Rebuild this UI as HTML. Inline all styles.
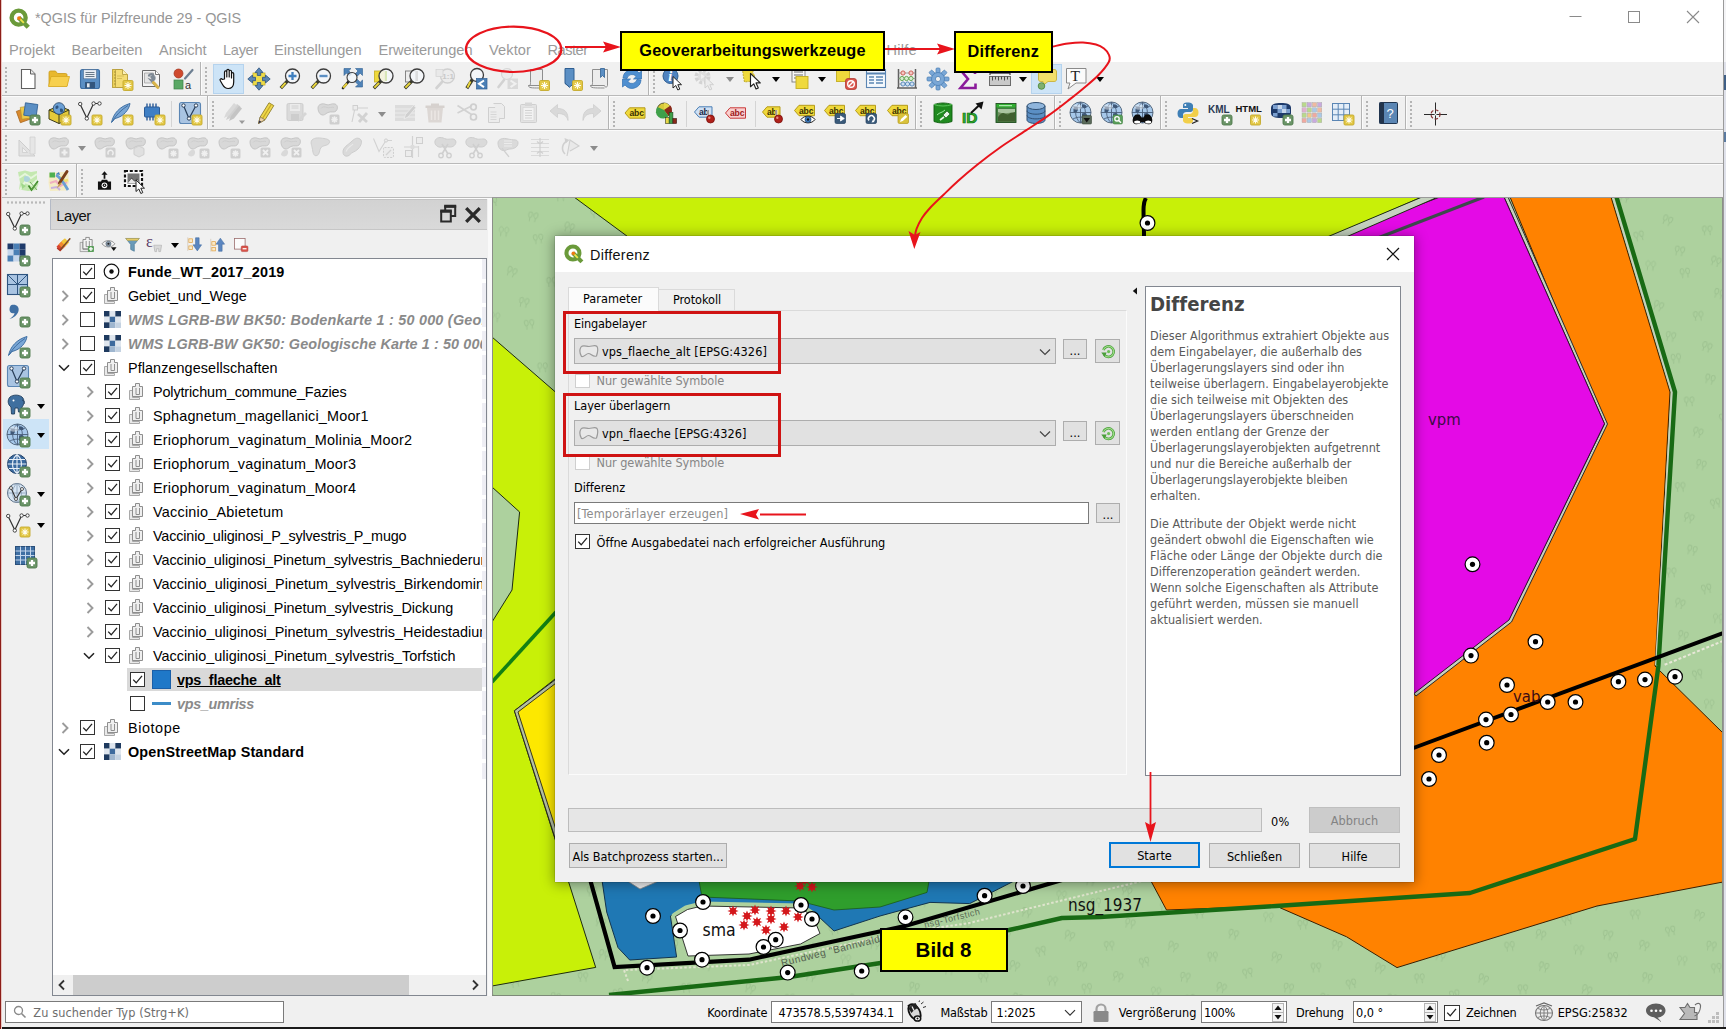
<!DOCTYPE html><html lang="de"><head><meta charset="utf-8"><title>QGIS für Pilzfreunde</title><style>

*{box-sizing:border-box;margin:0;padding:0}
html,body{width:1726px;height:1029px;overflow:hidden;background:#f0f0f0}
body{position:relative;font-family:"Liberation Sans",sans-serif;font-size:14.4px;color:#000}
.abs{position:absolute}
.tx{position:absolute;white-space:nowrap;line-height:1}
.ui{font-family:"DejaVu Sans Condensed","DejaVu Sans","Liberation Sans",sans-serif;font-size:12.6px}
#titlebar{left:0;top:0;width:1726px;height:62px;background:#fff}
#tb{left:0;top:62px;width:1726px;height:136px;background:#f0f0f0}
.hl{position:absolute;left:2px;width:1724px;height:1px;background:#b9b9b9;box-shadow:0 1px 0 #fbfbfb}
.vsep{position:absolute;width:1px;background:#b4b4b4;box-shadow:1px 0 0 #fbfbfb}
.hdl{position:absolute;width:3px;height:26px;background-image:linear-gradient(#b4b4b4 0 2px,transparent 2px 4px);background-size:2px 4px;background-repeat:repeat-y}
.ic{position:absolute;width:24px;height:24px;overflow:visible}
.dd{position:absolute;width:0;height:0;border-left:4.5px solid transparent;border-right:4.5px solid transparent;border-top:5px solid #000}
.dd.g{border-top-color:#8c8c8c}
#leftbar{left:2px;top:198px;width:50px;height:798px;background:#f0f0f0}
#panelhdr{left:50px;top:199px;width:437px;height:31px;background:linear-gradient(#d2d2d2,#d9d9d9);border-left:1px solid #b4bac6;border-top:1px solid #c2c2c2;border-bottom:1px solid #c6c6c6}
#tree{left:52px;top:258px;width:435px;height:738px;background:#fff;border:1px solid #828790;overflow:hidden}
.row{position:absolute;left:0;height:24px;width:433px}
.cb{position:absolute;width:15px;height:15px;border:1px solid #333;background:#fff}
.cb svg{position:absolute;left:0;top:0}
.exp{position:absolute;width:10px;height:10px}
#status{left:0;top:996px;width:1726px;height:31px;background:#f0f0f0}
.fld{position:absolute;background:#fff;border:1px solid #7a7a7a;height:22px}
#dlg{left:555px;top:236px;width:859px;height:646px;background:#f0f0f0;box-shadow:0 1px 12px 1px rgba(0,0,0,.38),0 0 1px rgba(0,0,0,.55)}
#dlgtitle{left:0;top:0;width:859px;height:36px;background:#fff}
.btn{position:absolute;background:#e1e1e1;border:1px solid #adadad;text-align:center;white-space:nowrap}
.combo{position:absolute;background:#e1e1e1;border:1px solid #adadad}
.redbox{position:absolute;border:3px solid #cf1313}
.ybox{position:absolute;background:#ffff00;border:2px solid #000;font-weight:bold;text-align:center;white-space:nowrap;font-family:"Liberation Sans",sans-serif}

</style></head><body>
<div id="titlebar" class="abs"></div>
<svg class="abs" style="left:9px;top:8px" width="21" height="21" viewBox="0 0 24 24"><circle cx="11" cy="11" r="8" fill="none" stroke="#6a9a3a" stroke-width="5"/><path d="M11 11 L22 22" stroke="#6a9a3a" stroke-width="5.2" stroke-linecap="butt"/><path d="M12.5 12.5 L17 17" stroke="#f0e64a" stroke-width="2.2"/><circle cx="11.5" cy="11.5" r="2.2" fill="#ee7913"/></svg>
<div class="tx " style="left:35px;top:10.5px;letter-spacing:-0.037px;font-size:14.4px;color:#969696;">*QGIS für Pilzfreunde 29 - QGIS</div>
<svg class="abs" style="left:1560px;top:5px" width="150" height="24" viewBox="0 0 150 24"><path d="M9.5 11.5h12" stroke="#8a8a8a" stroke-width="1"/><rect x="68.5" y="6.5" width="11" height="11" fill="none" stroke="#8a8a8a"/><path d="M127 6l12 12M139 6l-12 12" stroke="#8a8a8a" stroke-width="1.1"/></svg>
<div class="tx " style="left:9px;top:43px;letter-spacing:0.083px;font-size:14.6px;color:#9a9a9a;">Projekt</div>
<div class="tx " style="left:71.5px;top:43px;letter-spacing:0.041px;font-size:14.6px;color:#9a9a9a;">Bearbeiten</div>
<div class="tx " style="left:159px;top:43px;letter-spacing:-0.051px;font-size:14.6px;color:#9a9a9a;">Ansicht</div>
<div class="tx " style="left:223px;top:43px;letter-spacing:-0.303px;font-size:14.6px;color:#9a9a9a;">Layer</div>
<div class="tx " style="left:274px;top:43px;letter-spacing:-0.011px;font-size:14.6px;color:#9a9a9a;">Einstellungen</div>
<div class="tx " style="left:378.5px;top:43px;letter-spacing:-0.008px;font-size:14.6px;color:#9a9a9a;">Erweiterungen</div>
<div class="tx " style="left:489px;top:43px;letter-spacing:0.104px;font-size:14.6px;color:#9a9a9a;">Vektor</div>
<div class="tx " style="left:547.5px;top:43px;letter-spacing:-0.497px;font-size:14.6px;color:#9a9a9a;">Raster</div>
<div class="tx " style="left:886.5px;top:43px;letter-spacing:0.259px;font-size:14.6px;color:#9a9a9a;">Hilfe</div>
<div id="tb" class="abs"></div>
<div class="hl" style="top:95px"></div>
<div class="hl" style="top:129px"></div>
<div class="hl" style="top:163px"></div>
<div class="hl" style="top:197px"></div>
<div id="leftbar" class="abs"></div>
<div class="hdl" style="left:5px;top:67px"></div>
<div class="hdl" style="left:5px;top:101px"></div>
<div class="hdl" style="left:5px;top:135px"></div>
<div class="hdl" style="left:5px;top:169px"></div>
<svg class="ic" style="left:16.0px;top:66.5px;width:24px;height:24px" viewBox="0 0 24 24"><path d="M5.500 2.500h9l4.500 4.500v14.500h-13.500z" fill="#fff" stroke="#5f5f5f" stroke-width="1.100"/><path d="M14.500 2.500v4.500h4.500" fill="#e8e8e8" stroke="#5f5f5f" stroke-width="1"/></svg>
<svg class="ic" style="left:47.0px;top:66.5px;width:24px;height:24px" viewBox="0 0 24 24"><path d="M2 5.500c0-1 .5-1.500 1.500-1.500h5l2 2.500h8c1 0 1.500.5 1.500 1.500v11h-18z" fill="#e8b82e" stroke="#c99a1a" stroke-width="0.800"/><path d="M1.500 19.500l2.500-10h18.500l-2.500 10z" fill="#f7d04f" stroke="#d8a820" stroke-width="0.800"/></svg>
<svg class="ic" style="left:78.0px;top:66.5px;width:24px;height:24px" viewBox="0 0 24 24"><rect x="2.500" y="2.500" width="19" height="19" rx="2" fill="#5b8fc4" stroke="#3f6fa3" stroke-width="1.100"/><rect x="5.500" y="2.800" width="13" height="9" fill="#e9eef4" stroke="#4a6b90" stroke-width="0.600"/><path d="M7.500 5.500h9M7.500 7.500h9M7.500 9.500h9" stroke="#5a6b7c" stroke-width="0.900"/><rect x="7" y="15" width="10" height="6.300" fill="#33567d"/><rect x="9" y="16.300" width="2.600" height="4" fill="#dfe6ee"/></svg>
<svg class="ic" style="left:109.0px;top:66.5px;width:24px;height:24px" viewBox="0 0 24 24"><path d="M3.500 2.500h10l5 5v13h-15z" fill="#f4dc74" stroke="#b9a040" stroke-width="1"/><path d="M13.500 2.500v5h5" fill="#fbf0b8" stroke="#b9a040" stroke-width="0.900"/><path d="M3.500 2.500h3v18h-3z" fill="#ecd15a" stroke="#b9a040" stroke-width="0.800"/><path d="M5 5h1.500M5 8h1.500M5 11h1.500M5 14h1.500M5 17h1.500" stroke="#8a7726" stroke-width="0.700"/><path d="M8 9h7M8 11.500h5" stroke="#d6be55" stroke-width="1"/><rect x="14" y="13.5" width="10" height="10" rx="1.200" fill="#e3c846" stroke="#c4a92c" stroke-width="0.900"/><path d="M19 15.0v7M15.5 18.5h7M16.5 16.0l5 5M21.5 16.0l-5 5" stroke="#fffdf0" stroke-width="1.050"/><circle cx="19" cy="18.5" r="1.300" fill="#fffdf0"/></svg>
<svg class="ic" style="left:140.0px;top:66.5px;width:24px;height:24px" viewBox="0 0 24 24"><path d="M2.500 3.500h13l4 4v12h-17z" fill="#f4f4f4" stroke="#6a6a6a" stroke-width="1"/><path d="M15.500 3.500v4h4" fill="#fff" stroke="#6a6a6a" stroke-width="0.900"/><path d="M4.500 6h9v10h-9z" fill="#e4e4e4" stroke="#9a9a9a" stroke-width="0.700"/><path d="M9 8.500c1.500-2 4-1.500 4.500 0l-2 1.500 1 1.500 2-1c.5 2-1.500 3.500-3.500 2.800l5.500 6.200" fill="none" stroke="#7f8a95" stroke-width="2.200" stroke-linecap="round"/><path d="M13.500 15.500l4.500 5" stroke="#d9b44a" stroke-width="3" stroke-linecap="round"/></svg>
<svg class="ic" style="left:171.0px;top:66.5px;width:24px;height:24px" viewBox="0 0 24 24"><circle cx="7.500" cy="6.500" r="4.500" fill="#cf4a2e" stroke="#a03520" stroke-width="0.700"/><rect x="3" y="13" width="9" height="9" fill="#5aa865" stroke="#3d8248" stroke-width="0.700"/><path d="M14 11.500L21.500 3" stroke="#6d7f92" stroke-width="2.200" stroke-linecap="round"/><text x="14" y="21.500" font-family="Liberation Sans,sans-serif" font-size="11" fill="#333">a</text></svg>
<div class="vsep" style="left:200px;top:62px;height:33px"></div>
<div class="hdl" style="left:205px;top:67px"></div>
<div class="abs" style="left:213px;top:64px;width:31px;height:30px;background:#cde4f7;border:1px solid #b5d3ee"></div>
<svg class="ic" style="left:217.0px;top:66.5px;width:24px;height:24px" viewBox="0 0 24 24"><path d="M7.500 12V5.200c0-1.700 2.300-1.700 2.300 0V10 3.700c0-1.700 2.400-1.700 2.400 0V10 4.500c0-1.700 2.300-1.700 2.300 0V11 6.800c0-1.600 2.200-1.600 2.200 0V15c0 4-2 6.500-5.500 6.500-3 0-4.300-1.500-5.700-4l-2.300-4c-.8-1.400 1-2.400 2-1.200z" fill="#fff" stroke="#111" stroke-width="1.200" stroke-linejoin="round"/></svg>
<svg class="ic" style="left:247.0px;top:66.5px;width:24px;height:24px" viewBox="0 0 24 24"><rect x="6" y="6" width="12" height="12" fill="#eedc4a" stroke="#c9b52a" stroke-width="0.800"/><g fill="#5b86b4" stroke="#2f5580" stroke-width="0.800"><path d="M12 0.800l4 4.700h-2.300v3h-3.400v-3H8z"/><path d="M12 23.200l4-4.700h-2.300v-3h-3.400v3H8z"/><path d="M0.800 12l4.700-4v2.300h3v3.400h-3V16z"/><path d="M23.200 12l-4.700-4v2.300h-3v3.400h3V16z"/></g></svg>
<svg class="ic" style="left:278.0px;top:66.5px;width:24px;height:24px" viewBox="0 0 24 24"><path d="M9.600000000000001 13.899999999999999L2.800 21.200" stroke="#3a3a2a" stroke-width="3.400" stroke-linecap="butt"/><path d="M7.600000000000001 15.899999999999999L3.400 20.600" stroke="#ecd93f" stroke-width="2" stroke-linecap="butt"/><circle cx="14.5" cy="9" r="7" fill="#f4f7fa" fill-opacity="0.85" stroke="#3c3c3c" stroke-width="1.300"/><path d="M14.500 5v8M10.500 9h8" stroke="#3f7fbf" stroke-width="2.300"/></svg>
<svg class="ic" style="left:309.0px;top:66.5px;width:24px;height:24px" viewBox="0 0 24 24"><path d="M9.600000000000001 13.899999999999999L2.800 21.200" stroke="#3a3a2a" stroke-width="3.400" stroke-linecap="butt"/><path d="M7.600000000000001 15.899999999999999L3.400 20.600" stroke="#ecd93f" stroke-width="2" stroke-linecap="butt"/><circle cx="14.5" cy="9" r="7" fill="#f4f7fa" fill-opacity="0.85" stroke="#3c3c3c" stroke-width="1.300"/><path d="M10.500 9h8" stroke="#5b8fc4" stroke-width="2.400"/></svg>
<svg class="ic" style="left:340.0px;top:66.5px;width:24px;height:24px" viewBox="0 0 24 24"><g fill="#4f83b8" stroke="#2f5f92" stroke-width="0.600"><path d="M4 1.500h7l-2.300 2.300 3 3-2.200 2.200-3-3L4 8.500z"/><path d="M22.500 1.500v7l-2.300-2.300-3 3-2.200-2.200 3-3-2.500-2.500z"/><path d="M22.500 20v-7l-2.300 2.300-3-3-2.200 2.200 3 3-2.500 2.500z"/></g><path d="M8.500 14.500L3 21" stroke="#222" stroke-width="2.600" stroke-linecap="round"/><path d="M7 16.500L3.200 20.800" stroke="#e5cf3c" stroke-width="2.200"/><circle cx="12" cy="10.500" r="5" fill="#f4f7fa" fill-opacity=".8" stroke="#3c3c3c" stroke-width="1.100"/></svg>
<svg class="ic" style="left:371.0px;top:66.5px;width:24px;height:24px" viewBox="0 0 24 24"><rect x="3.500" y="4" width="10" height="11" fill="#efd93c" stroke="#c4ae22" stroke-width="0.800"/><path d="M10.100000000000001 13.899999999999999L2.800 21.200" stroke="#3a3a2a" stroke-width="3.400" stroke-linecap="butt"/><path d="M8.100000000000001 15.899999999999999L3.400 20.600" stroke="#ecd93f" stroke-width="2" stroke-linecap="butt"/><circle cx="15" cy="9" r="7" fill="#f4f7fa" fill-opacity="0.85" stroke="#3c3c3c" stroke-width="1.300"/><path d="M15 4v10" stroke="#cfe0a0" stroke-width="1.500"/></svg>
<svg class="ic" style="left:402.0px;top:66.5px;width:24px;height:24px" viewBox="0 0 24 24"><rect x="3.500" y="4" width="10" height="11" fill="#ececec" stroke="#7a7a7a" stroke-width="0.900"/><path d="M10.100000000000001 13.899999999999999L2.800 21.200" stroke="#3a3a2a" stroke-width="3.400" stroke-linecap="butt"/><path d="M8.100000000000001 15.899999999999999L3.400 20.600" stroke="#ecd93f" stroke-width="2" stroke-linecap="butt"/><circle cx="15" cy="9" r="7" fill="#f4f7fa" fill-opacity="0.85" stroke="#3c3c3c" stroke-width="1.300"/><path d="M15 4v10" stroke="#d5d5d5" stroke-width="1.500"/></svg>
<svg class="ic" style="left:433.0px;top:66.5px;width:24px;height:24px" viewBox="0 0 24 24"><path d="M9 15L3.500 21" stroke="#d2d2d2" stroke-width="2.600" stroke-linecap="round"/><circle cx="14.500" cy="9" r="7" fill="#ececec" stroke="#cfcfcf" stroke-width="1.300"/><text x="9.300" y="12" font-family="Liberation Sans,sans-serif" font-weight="bold" font-size="8" fill="#c8c8c8">1:1</text><rect x="3" y="2.500" width="7" height="7" fill="#e9e9e9" stroke="#d2d2d2" stroke-width="0.700"/></svg>
<svg class="ic" style="left:464.0px;top:66.5px;width:24px;height:24px" viewBox="0 0 24 24"><path d="M8.45 12.55L2.800 21.200" stroke="#3a3a2a" stroke-width="3.400" stroke-linecap="butt"/><path d="M6.449999999999999 14.55L3.400 20.600" stroke="#ecd93f" stroke-width="2" stroke-linecap="butt"/><circle cx="13" cy="8" r="6.5" fill="#f4f7fa" fill-opacity="0.85" stroke="#3c3c3c" stroke-width="1.300"/><rect x="12.500" y="11.500" width="10.500" height="10.500" fill="#4a7fb5" stroke="#2f5f92" stroke-width="0.700"/><path d="M20 13.500l-5 3.300 5 3.300" fill="none" stroke="#fff" stroke-width="2"/></svg>
<svg class="ic" style="left:495.0px;top:66.5px;width:24px;height:24px" viewBox="0 0 24 24"><path d="M9 13L3.500 20" stroke="#d2d2d2" stroke-width="2.600" stroke-linecap="round"/><circle cx="12" cy="7" r="5.500" fill="#ececec" stroke="#d6d6d6" stroke-width="1.200"/><rect x="12.500" y="11.500" width="10.500" height="10.500" fill="#d9d9d9"/><path d="M15.500 13.500l5 3.300-5 3.300" fill="none" stroke="#f0f0f0" stroke-width="2"/></svg>
<svg class="ic" style="left:526.0px;top:66.5px;width:24px;height:24px" viewBox="0 0 24 24"><path d="M4.500 2.500h12v16c0 2-3 2-3 0h-11c2 0 2-1 2-3z" fill="#ececec" stroke="#8e8e8e" stroke-width="1"/><path d="M2.500 18.500c0 2.500 3 2.500 11 2.500" fill="none" stroke="#8e8e8e" stroke-width="1"/><rect x="13.5" y="13.5" width="10" height="10" rx="1.200" fill="#e3c846" stroke="#c4a92c" stroke-width="0.900"/><path d="M18.5 15.0v7M15.0 18.5h7M16.0 16.0l5 5M21.0 16.0l-5 5" stroke="#fffdf0" stroke-width="1.050"/><circle cx="18.5" cy="18.5" r="1.300" fill="#fffdf0"/></svg>
<svg class="ic" style="left:559.0px;top:66.5px;width:24px;height:24px" viewBox="0 0 24 24"><path d="M6 1.500h9v15l-4.500 3.500-4.500-3.500z" fill="#5b8fc4" stroke="#2f5f92" stroke-width="1"/><path d="M6 16l4.500 4.500" stroke="#2f5f92" stroke-width="1"/><rect x="13.5" y="13.5" width="10" height="10" rx="1.200" fill="#e3c846" stroke="#c4a92c" stroke-width="0.900"/><path d="M18.5 15.0v7M15.0 18.5h7M16.0 16.0l5 5M21.0 16.0l-5 5" stroke="#fffdf0" stroke-width="1.050"/><circle cx="18.5" cy="18.5" r="1.300" fill="#fffdf0"/></svg>
<svg class="ic" style="left:588.0px;top:66.5px;width:24px;height:24px" viewBox="0 0 24 24"><path d="M4.500 2.500h15v16c0 2-3 2-3 0h-14c2 0 2-1 2-3z" fill="#ececec" stroke="#8e8e8e" stroke-width="1"/><path d="M2.500 18.500c0 2.500 3 2.500 14 2.500" fill="none" stroke="#8e8e8e" stroke-width="1"/><path d="M12.500 1.500h4v9l-2-2-2 2z" fill="#5b8fc4" stroke="#2f5f92" stroke-width="0.800"/></svg>
<svg class="ic" style="left:620.0px;top:66.5px;width:24px;height:24px" viewBox="0 0 24 24"><path d="M3 11a9 9 0 0 1 16-5l2.500-2v8h-8l2.700-2.500a5.200 5.200 0 0 0-9.200 2z" fill="#4f8fd0" stroke="#2f6fb0" stroke-width="0.700"/><path d="M21 13a9 9 0 0 1-16 5l-2.500 2v-8h8l-2.700 2.500a5.200 5.200 0 0 0 9.200-2z" fill="#4f8fd0" stroke="#2f6fb0" stroke-width="0.700"/></svg>
<div class="vsep" style="left:648px;top:62px;height:33px"></div>
<div class="hdl" style="left:653px;top:67px"></div>
<svg class="ic" style="left:661.0px;top:66.5px;width:24px;height:24px" viewBox="0 0 24 24"><circle cx="9.500" cy="9" r="7.500" fill="#4f83c0" stroke="#2f5f92" stroke-width="1"/><text x="7.200" y="14" font-family="Liberation Serif,serif" font-style="italic" font-weight="bold" font-size="14" fill="#fff">i</text><path transform="translate(12 9.5) scale(1)" d="M0 0v11.500l2.800-2.500 2 4.500 2-.9-2-4.400h3.700z" fill="#fff" stroke="#222" stroke-width="1" stroke-linejoin="round"/></svg>
<svg class="ic" style="left:693.0px;top:66.5px;width:24px;height:24px" viewBox="0 0 24 24"><circle cx="9.500" cy="9.500" r="6" fill="none" stroke="#d3d3d3" stroke-width="4" stroke-dasharray="3 1.700"/><circle cx="9.500" cy="9.500" r="4.500" fill="#dedede"/><path d="M8 7l4 2.500-4 2.500z" fill="#efefef"/><path d="M12 9.500v11.500l2.800-2.500 2 4.500 2-.9-2-4.400h3.700z" fill="#ececec" stroke="#d0d0d0" stroke-width="1"/></svg>
<div class="dd g" style="left:725.5px;top:77.0px"></div>
<svg class="ic" style="left:740.0px;top:66.5px;width:24px;height:24px" viewBox="0 0 24 24"><path d="M2.500 2.500h11l-1 4 2 1-1 6.500-9 1-1-5z" fill="#efd93c" stroke="#b9a52a" stroke-width="0.900" stroke-dasharray="2 1"/><path transform="translate(10.5 6.5) scale(1.15)" d="M0 0v11.500l2.800-2.500 2 4.500 2-.9-2-4.400h3.700z" fill="#fff" stroke="#222" stroke-width="1" stroke-linejoin="round"/></svg>
<div class="dd" style="left:771.5px;top:77.0px"></div>
<svg class="ic" style="left:787.0px;top:66.5px;width:24px;height:24px" viewBox="0 0 24 24"><rect x="5" y="2" width="13" height="13" fill="#f7f7f7" stroke="#7a7a7a" stroke-width="0.900"/><path d="M7 5h9M7 8h9M7 11h9" stroke="#9a9a9a" stroke-width="1.500"/><rect x="9" y="9.500" width="12" height="12" fill="#efd93c" stroke="#c4ae22" stroke-width="0.900"/></svg>
<div class="dd" style="left:817.5px;top:77.0px"></div>
<svg class="ic" style="left:834.0px;top:66.5px;width:24px;height:24px" viewBox="0 0 24 24"><rect x="2.500" y="1.500" width="13" height="13" fill="#efd93c" stroke="#c4ae22" stroke-width="0.900"/><rect x="11.500" y="11.500" width="11" height="11" rx="2.500" fill="#d9534a" stroke="#b03a32" stroke-width="0.800"/><circle cx="17" cy="17" r="3.300" fill="none" stroke="#fff" stroke-width="1.400"/><path d="M14.800 19.200l4.400-4.400" stroke="#fff" stroke-width="1.400"/></svg>
<svg class="ic" style="left:863.5px;top:66.5px;width:24px;height:24px" viewBox="0 0 24 24"><rect x="2.500" y="2.500" width="19" height="18" fill="#f4f8fc" stroke="#5b86b4" stroke-width="1.100"/><path d="M2.500 6.500h19" stroke="#5b86b4" stroke-width="2"/><path d="M5 10h5M12 10h7M5 13h5M12 13h7M5 16h5M12 16h7" stroke="#5b86b4" stroke-width="1.300"/></svg>
<svg class="ic" style="left:894.7px;top:66.5px;width:24px;height:24px" viewBox="0 0 24 24"><path d="M3.500 2v19M20.500 2v19M2 21h20" stroke="#5f5f5f" stroke-width="1.500"/><path d="M3.500 6h17M3.500 11.500h17M3.500 17h17" stroke="#8a8a8a" stroke-width="0.800"/><g stroke-width="0.900"><circle cx="8" cy="6" r="2.100" fill="#f4c8c4" stroke="#c9534a"/><circle cx="16" cy="6" r="2.100" fill="#f4c8c4" stroke="#c9534a"/><circle cx="7" cy="11.500" r="2.100" fill="#d6ecd0" stroke="#5aa04a"/><circle cx="11.500" cy="11.500" r="2.100" fill="#d6ecd0" stroke="#5aa04a"/><circle cx="16" cy="11.500" r="2.100" fill="#d6ecd0" stroke="#5aa04a"/><circle cx="8" cy="17" r="2.100" fill="#cfe0f0" stroke="#4a7fb5"/><circle cx="12.500" cy="17" r="2.100" fill="#cfe0f0" stroke="#4a7fb5"/><circle cx="17" cy="17" r="2.100" fill="#cfe0f0" stroke="#4a7fb5"/></g></svg>
<svg class="ic" style="left:925.7px;top:66.5px;width:24px;height:24px" viewBox="0 0 24 24"><g transform="translate(12 12)"><g fill="#7aa7d6" stroke="#4a7fb5" stroke-width="0.700"><rect x="-2" y="-11" width="4" height="7" rx="1" transform="rotate(0)"/><rect x="-2" y="-11" width="4" height="7" rx="1" transform="rotate(45)"/><rect x="-2" y="-11" width="4" height="7" rx="1" transform="rotate(90)"/><rect x="-2" y="-11" width="4" height="7" rx="1" transform="rotate(135)"/><rect x="-2" y="-11" width="4" height="7" rx="1" transform="rotate(180)"/><rect x="-2" y="-11" width="4" height="7" rx="1" transform="rotate(225)"/><rect x="-2" y="-11" width="4" height="7" rx="1" transform="rotate(270)"/><rect x="-2" y="-11" width="4" height="7" rx="1" transform="rotate(315)"/></g><circle r="6.500" fill="#7aa7d6" stroke="#4a7fb5" stroke-width="0.800"/><circle r="2.600" fill="#f0f0f0" stroke="#4a7fb5" stroke-width="0.800"/></g></svg>
<svg class="ic" style="left:956.0px;top:66.5px;width:24px;height:24px" viewBox="0 0 24 24"><path d="M19 7V3H4.500l7.500 9-7.500 9H19.500v-4.500" fill="none" stroke="#8a1a9a" stroke-width="2.600" stroke-linejoin="miter"/></svg>
<svg class="ic" style="left:987.8px;top:66.5px;width:24px;height:24px" viewBox="0 0 24 24"><rect x="1.500" y="9.500" width="21" height="9" fill="#c9c9c9" stroke="#6a6a6a" stroke-width="1"/><path d="M4.500 9.500v4M7.500 9.500v3M10.500 9.500v4M13.500 9.500v3M16.500 9.500v4M19.500 9.500v3" stroke="#4a4a4a" stroke-width="1"/><path d="M2 6h20" stroke="#444" stroke-width="1.500"/><path d="M2 4v4M22 4v4" stroke="#444" stroke-width="1.200"/></svg>
<div class="dd" style="left:1018.5px;top:77.0px"></div>
<div class="abs" style="left:1031px;top:64px;width:31px;height:30px;background:#cde4f7;border:1px solid #b5d3ee"></div>
<svg class="ic" style="left:1034.6px;top:66.5px;width:24px;height:24px" viewBox="0 0 24 24"><path d="M6 2.500h13c2 0 2.500 1 2.500 2.500v7c0 1.500-.5 2.500-2.500 2.500h-6l-5 4v-4h-2c-2 0-2.500-1-2.500-2.500v-7c0-1.500.5-2.500 2.500-2.500z" fill="#f2df6a" stroke="#c9b23a" stroke-width="0.900"/><circle cx="6.500" cy="19" r="3.300" fill="#7fb070" stroke="#4f8a40" stroke-width="0.900"/></svg>
<svg class="ic" style="left:1064.0px;top:66.5px;width:24px;height:24px" viewBox="0 0 24 24"><path d="M2.500 1.500h19.500v14.500h-10l-8 6 2-6h-3.500z" fill="#fbfbfb" stroke="#8a8a8a" stroke-width="1"/><text x="6.500" y="14" font-family="Liberation Serif,serif" font-size="15.500" fill="#222">T</text></svg>
<div class="dd" style="left:1096.1px;top:77.0px"></div>
<svg class="ic" style="left:16.0px;top:101.0px;width:24px;height:24px" viewBox="0 0 24 24"><rect x="2" y="8" width="12" height="12" transform="rotate(-20 8 14)" fill="#d98a2e" stroke="#a8641a" stroke-width="0.700"/><rect x="5" y="5.500" width="12" height="12" transform="rotate(-8 11 11)" fill="#efc94a" stroke="#b9972a" stroke-width="0.700"/><rect x="8.500" y="2.500" width="12.500" height="12.500" transform="rotate(8 14 9)" fill="#5b8fc4" stroke="#2f5f92" stroke-width="0.800"/><rect x="14" y="14" width="10" height="10" rx="1.800" fill="#6b9468" stroke="#4f7a4c" stroke-width="0.900"/><path d="M19 16v6M16 19h6" stroke="#fff" stroke-width="2.300"/></svg>
<svg class="ic" style="left:47.0px;top:101.0px;width:24px;height:24px" viewBox="0 0 24 24"><path d="M2 9l10-4 10 4v9l-10 4.500-10-4.500z" fill="#e5cb3a" stroke="#3a3a1a" stroke-width="1"/><path d="M2 9l10 4.500 10-4.500M12 13.500v9" fill="none" stroke="#3a3a1a" stroke-width="1"/><circle cx="12" cy="7.500" r="5.800" fill="#6a9fd4" stroke="#2f4f72" stroke-width="0.900"/><path d="M8.500 5.500c1.500-1.500 3-1 3 .5s-1.500 2.500-3 1.500zM13 8c1.500-1 3.500 0 3 2s-2.500 2-3 0z" fill="#2f5580"/><rect x="14" y="14" width="10" height="10" rx="1.200" fill="#e3c846" stroke="#c4a92c" stroke-width="0.900"/><path d="M19 15.5v7M15.5 19h7M16.5 16.5l5 5M21.5 16.5l-5 5" stroke="#fffdf0" stroke-width="1.050"/><circle cx="19" cy="19" r="1.300" fill="#fffdf0"/></svg>
<svg class="ic" style="left:78.0px;top:101.0px;width:24px;height:24px" viewBox="0 0 24 24"><path d="M2 3l6.800 14 6.800-14.500h6" fill="none" stroke="#333" stroke-width="1.200"/><circle cx="2.200" cy="3" r="1.700" fill="#fff" stroke="#333" stroke-width="0.900"/><circle cx="8.800" cy="17.500" r="1.700" fill="#fff" stroke="#333" stroke-width="0.900"/><circle cx="15.600" cy="2.500" r="1.700" fill="#fff" stroke="#333" stroke-width="0.900"/><circle cx="21.500" cy="2.500" r="1.700" fill="#fff" stroke="#333" stroke-width="0.900"/><rect x="14" y="14" width="10" height="10" rx="1.200" fill="#e3c846" stroke="#c4a92c" stroke-width="0.900"/><path d="M19 15.5v7M15.5 19h7M16.5 16.5l5 5M21.5 16.5l-5 5" stroke="#fffdf0" stroke-width="1.050"/><circle cx="19" cy="19" r="1.300" fill="#fffdf0"/></svg>
<svg class="ic" style="left:109.0px;top:101.0px;width:24px;height:24px" viewBox="0 0 24 24"><path d="M2.500 21.500c2-9 8-16 18.500-19-1 6-6 13-15 15z" fill="#7aa7d6" stroke="#3f6fa3" stroke-width="1"/><path d="M3 21c4-7 9-12 16-16.500" stroke="#3f6fa3" stroke-width="1" fill="none"/><rect x="14" y="14" width="10" height="10" rx="1.200" fill="#e3c846" stroke="#c4a92c" stroke-width="0.900"/><path d="M19 15.5v7M15.5 19h7M16.5 16.5l5 5M21.5 16.5l-5 5" stroke="#fffdf0" stroke-width="1.050"/><circle cx="19" cy="19" r="1.300" fill="#fffdf0"/></svg>
<svg class="ic" style="left:141.0px;top:101.0px;width:24px;height:24px" viewBox="0 0 24 24"><rect x="3.500" y="6" width="15" height="10" rx="1" fill="#3f7fc4" stroke="#2a5a96" stroke-width="1"/><path d="M6 2.500v3.500M9 2.500v3.500M12 2.500v3.500M15 2.500v3.500M6 16v3.500M9 16v3.500M12 16v3.500" stroke="#2a5a96" stroke-width="1.400"/><rect x="14" y="14" width="10" height="10" rx="1.200" fill="#e3c846" stroke="#c4a92c" stroke-width="0.900"/><path d="M19 15.5v7M15.5 19h7M16.5 16.5l5 5M21.5 16.5l-5 5" stroke="#fffdf0" stroke-width="1.050"/><circle cx="19" cy="19" r="1.300" fill="#fffdf0"/></svg>
<div class="abs" style="left:171px;top:101px;width:1px;height:26px;background:#d4d4d4"></div>
<svg class="ic" style="left:178.0px;top:101.0px;width:24px;height:24px" viewBox="0 0 24 24"><rect x="1.500" y="1.500" width="21" height="21" rx="2" fill="#a9c4e2" stroke="#5b86b4" stroke-width="1.100"/><path d="M5.500 4.500l5.500 13 7-13" fill="none" stroke="#2a3f5a" stroke-width="1.200"/><circle cx="5.500" cy="4.500" r="1.700" fill="#fff" stroke="#2a3f5a"/><circle cx="11" cy="17.500" r="1.700" fill="#fff" stroke="#2a3f5a"/><circle cx="18" cy="4.500" r="1.700" fill="#fff" stroke="#2a3f5a"/><rect x="14" y="14" width="10" height="10" rx="1.200" fill="#e3c846" stroke="#c4a92c" stroke-width="0.900"/><path d="M19 15.5v7M15.5 19h7M16.5 16.5l5 5M21.5 16.5l-5 5" stroke="#fffdf0" stroke-width="1.050"/><circle cx="19" cy="19" r="1.300" fill="#fffdf0"/></svg>
<div class="vsep" style="left:207px;top:96px;height:33px"></div>
<div class="hdl" style="left:212px;top:101px"></div>
<svg class="ic" style="left:222.0px;top:101.0px;width:24px;height:24px" viewBox="0 0 24 24"><path d="M4 19l2-5 9-11 3.500 2.500-9 11z" fill="#d0d0d0"/><path d="M7 20l2-5 8-10 3 2.500-8 10z" fill="#c4c4c4"/><path d="M2 17l2-5 8-10 3 2.500-8 10z" fill="#d9d9d9"/><path d="M17 19.500h6l-3 3.500z" fill="#9a9a9a"/></svg>
<svg class="ic" style="left:254.0px;top:101.0px;width:24px;height:24px" viewBox="0 0 24 24"><path d="M4.500 22.500L6.200 16 15 1.800l4.800 2.800L11 18.800z" fill="#f0d84a" stroke="#8f7f2a" stroke-width="0.900" stroke-linejoin="round"/><path d="M8.600 17.400L17.400 3.200" stroke="#c4a92a" stroke-width="1.200"/><path d="M4.500 22.500L6.200 16l4.800 2.800z" fill="#ecd2a8" stroke="#7a6a4a" stroke-width="0.700"/><path d="M4.500 22.500l.8-2.900 2 1.200z" fill="#2a2a4a"/></svg>
<svg class="ic" style="left:284.0px;top:101.0px;width:24px;height:24px" viewBox="0 0 24 24"><rect x="3" y="2.500" width="16" height="17" rx="1.500" fill="#dadada" stroke="#cdcdcd"/><rect x="6" y="3" width="10" height="7" fill="#ebebeb"/><path d="M7.500 5h7M7.500 7h7" stroke="#d0d0d0"/><rect x="7" y="13" width="8" height="6" fill="#cdcdcd"/><path d="M14 21l2-5 5-5 2 2-5 5z" fill="#d6d6d6"/></svg>
<svg class="ic" style="left:316.0px;top:101.0px;width:24px;height:24px" viewBox="0 0 24 24"><path d="M2 7c0-4 5-5 8-3.500 3 1.500 5-1.500 9-0.500 3 1 3 5 1 7-2 2-5 0-8 1.500-3 1.500-4 3.500-7 2-2-1-3-4-3-6.500z" fill="#d8d8d8" stroke="#c6c6c6" stroke-width="1"/><path d="M5 7.500c1-2 4-2 6-1s5-1 7 0" fill="none" stroke="#cacaca" stroke-width="0.800"/><rect x="13.5" y="13.5" width="10" height="10" rx="1.500" fill="#cfcfcf"/><path d="M18.5 15.3v6.400M15.3 18.5h6.400M16.2 16.2l4.600 4.600M20.8 16.2l-4.600 4.600" stroke="#f0f0f0" stroke-width="1.500"/></svg>
<svg class="ic" style="left:347.7px;top:101.0px;width:24px;height:24px" viewBox="0 0 24 24"><path d="M4 21l3-14h13" fill="none" stroke="#d0d0d0" stroke-width="1.100"/><rect x="5" y="4.500" width="4.500" height="4.500" fill="#ececec" stroke="#cfcfcf"/><path d="M10 13l9 8M19 12l-8 9" stroke="#d2d2d2" stroke-width="2.800"/></svg>
<div class="dd g" style="left:378.1px;top:111.5px"></div>
<svg class="ic" style="left:393.0px;top:101.0px;width:24px;height:24px" viewBox="0 0 24 24"><rect x="2" y="4" width="20" height="16" fill="#dcdcdc"/><path d="M2 8h20M2 12h20M2 16h20" stroke="#ececec" stroke-width="1"/><path d="M11 18l1.500-4.500 8-9 2.500 2-8 9.500z" fill="#cfcfcf" stroke="#ececec" stroke-width="0.800"/></svg>
<svg class="ic" style="left:423.0px;top:101.0px;width:24px;height:24px" viewBox="0 0 24 24"><path d="M4 7h16l-1.500 14.500h-13z" fill="#dcd7d4"/><path d="M2.500 4.500h19v2.500h-19zM8 2.500h8v2h-8z" fill="#d6d1ce"/><path d="M8.500 9.500v9.500M12 9.500v9.500M15.500 9.500v9.500" stroke="#ebe7e4" stroke-width="1.500"/></svg>
<svg class="ic" style="left:454.7px;top:101.0px;width:24px;height:24px" viewBox="0 0 24 24"><path d="M2.500 4.500l14 9M2.500 12l14-7" stroke="#d2d2d2" stroke-width="1.800"/><circle cx="18.500" cy="6" r="2.800" fill="none" stroke="#cfcfcf" stroke-width="1.700"/><circle cx="18.500" cy="16" r="3" fill="none" stroke="#cfcfcf" stroke-width="1.700"/></svg>
<svg class="ic" style="left:485.0px;top:101.0px;width:24px;height:24px" viewBox="0 0 24 24"><path d="M3.500 6.500h8l3 3v12h-11z" fill="#ececec" stroke="#cfcfcf"/><path d="M8.500 2.500h8l3 3v12h-5" fill="#ececec" stroke="#cfcfcf"/><path d="M5.500 11h6M5.500 13.500h6M5.500 16h6M5.500 18.500h6" stroke="#d6d6d6"/></svg>
<svg class="ic" style="left:516.7px;top:101.0px;width:24px;height:24px" viewBox="0 0 24 24"><rect x="3.500" y="3.500" width="16" height="18" rx="1" fill="#e3e3e3" stroke="#cfcfcf"/><rect x="8" y="1.500" width="7" height="3.500" fill="#d6d6d6"/><rect x="6" y="6.500" width="11" height="13" fill="#f2f2f2" stroke="#d6d6d6" stroke-width="0.700"/><path d="M8 9.500h7M8 12h7M8 14.500h7M8 17h7" stroke="#d2d2d2"/></svg>
<svg class="ic" style="left:548.0px;top:101.0px;width:24px;height:24px" viewBox="0 0 24 24"><path d="M2 10l7.500-6.500v4c7 0 11 3.500 10.500 12-1.500-5-4.500-7-10.500-7v4z" fill="#d9d9d9" stroke="#cecece" stroke-width="0.800"/></svg>
<svg class="ic" style="left:579.0px;top:101.0px;width:24px;height:24px" viewBox="0 0 24 24"><path d="M22 10l-7.500-6.500v4c-7 0-11 3.500-10.500 12 1.500-5 4.500-7 10.500-7v4z" fill="#d9d9d9" stroke="#cecece" stroke-width="0.800"/></svg>
<div class="vsep" style="left:608px;top:96px;height:33px"></div>
<div class="hdl" style="left:613px;top:101px"></div>
<svg class="ic" style="left:622.8px;top:101.0px;width:24px;height:24px" viewBox="0 0 24 24"><g transform="translate(1.500 4)"><path d="M0.500 8l4.500-5.200h15.5v10.400h-15.5z" fill="#efd93c" stroke="#b59a1a" stroke-width="1"/><text x="5" y="11.200" font-family="Liberation Sans,sans-serif" font-weight="bold" font-size="8.600" letter-spacing="-0.2" fill="#3a3000">abc</text></g></svg>
<svg class="ic" style="left:655.0px;top:101.0px;width:24px;height:24px" viewBox="0 0 24 24"><circle cx="9" cy="9" r="7" fill="#d8c93a" stroke="#3a3a1a" stroke-width="0.800"/><path d="M9 9V2a7 7 0 0 1 6.500 4.500z" fill="#e5d84a"/><path d="M9 9l6.500-4.500a7 7 0 0 1-2 10.500z" fill="#8a2a1a"/><path d="M9 9l4.500 6a7 7 0 0 1-11-9z" fill="#3fa04a"/><rect x="10.500" y="16.500" width="3.700" height="6" fill="#e5d84a" stroke="#3a3a1a" stroke-width="0.600"/><rect x="14.200" y="11.500" width="3.700" height="11" fill="#3fa04a" stroke="#1a4a1a" stroke-width="0.600"/><rect x="17.900" y="17.500" width="3.700" height="5" fill="#8a2a1a" stroke="#3a1a1a" stroke-width="0.600"/></svg>
<div class="abs" style="left:686px;top:101px;width:1px;height:26px;background:#d4d4d4"></div>
<svg class="ic" style="left:692.6px;top:101.0px;width:24px;height:24px" viewBox="0 0 24 24"><g transform="translate(1 3)"><path d="M0.500 8l4.500-5.200h13.0v10.400h-13.0z" fill="#cfe0f4" stroke="#4a7fb5" stroke-width="1"/><text x="5" y="11.200" font-family="Liberation Sans,sans-serif" font-weight="bold" font-size="8.600" letter-spacing="-0.2" fill="#1a2a4a">ab</text></g><path d="M15.500 9v8" stroke="#e8e8e8" stroke-width="2"/><path d="M15.500 9v8" stroke="#888" stroke-width="0.800"/><circle cx="17.500" cy="18" r="4" fill="#b0201a" stroke="#7a100c" stroke-width="0.800"/><circle cx="16.300" cy="16.800" r="1.200" fill="#e88a80"/></svg>
<svg class="ic" style="left:722.8px;top:101.0px;width:24px;height:24px" viewBox="0 0 24 24"><g transform="translate(2 4)"><path d="M0.500 8l4.500-5.200h15.5v10.400h-15.5z" fill="#f9cfcf" stroke="#c93a3a" stroke-width="1"/><text x="5" y="11.200" font-family="Liberation Sans,sans-serif" font-weight="bold" font-size="8.600" letter-spacing="-0.2" fill="#a01a1a">abc</text></g></svg>
<div class="abs" style="left:755px;top:101px;width:1px;height:26px;background:#d4d4d4"></div>
<svg class="ic" style="left:761.4px;top:101.0px;width:24px;height:24px" viewBox="0 0 24 24"><g transform="translate(1 3)"><path d="M0.500 8l4.500-5.200h13.0v10.400h-13.0z" fill="#efd93c" stroke="#b59a1a" stroke-width="1"/><text x="5" y="11.200" font-family="Liberation Sans,sans-serif" font-weight="bold" font-size="8.600" letter-spacing="-0.2" fill="#3a3000">ab</text></g><path d="M15.500 9v8" stroke="#e8e8e8" stroke-width="2"/><path d="M15.500 9v8" stroke="#888" stroke-width="0.800"/><circle cx="17.500" cy="18" r="4" fill="#b0201a" stroke="#7a100c" stroke-width="0.800"/><circle cx="16.300" cy="16.800" r="1.200" fill="#e88a80"/></svg>
<svg class="ic" style="left:793.0px;top:101.0px;width:24px;height:24px" viewBox="0 0 24 24"><g transform="translate(1 1.500)"><path d="M0.500 8l4.500-5.200h15.5v10.400h-15.5z" fill="#efd93c" stroke="#b59a1a" stroke-width="1"/><text x="5" y="11.200" font-family="Liberation Sans,sans-serif" font-weight="bold" font-size="8.600" letter-spacing="-0.2" fill="#3a3000">abc</text></g><path d="M8 18.500c3-4.500 11-4.500 14 0-3 4.500-11 4.500-14 0z" fill="#fff" stroke="#222" stroke-width="1"/><circle cx="15" cy="18.500" r="3" fill="#3f7fc4" stroke="#1a3f6a" stroke-width="0.700"/><circle cx="15" cy="18.500" r="1.200" fill="#111"/></svg>
<svg class="ic" style="left:823.4px;top:101.0px;width:24px;height:24px" viewBox="0 0 24 24"><g transform="translate(1 1.500)"><path d="M0.500 8l4.500-5.200h15.5v10.400h-15.5z" fill="#efd93c" stroke="#b59a1a" stroke-width="1"/><text x="5" y="11.200" font-family="Liberation Sans,sans-serif" font-weight="bold" font-size="8.600" letter-spacing="-0.2" fill="#3a3000">abc</text></g><rect x="12" y="12.500" width="10.500" height="10" rx="1.500" fill="#3a5a7a" stroke="#22405e" stroke-width="0.700"/><path d="M14 17.500h3.500v-2.500l3.800 2.500-3.800 2.500v-2.500z" fill="#fff" stroke="#fff" stroke-width="0.800"/></svg>
<svg class="ic" style="left:854.0px;top:101.0px;width:24px;height:24px" viewBox="0 0 24 24"><g transform="translate(1 1.500)"><path d="M0.500 8l4.500-5.200h15.5v10.400h-15.5z" fill="#efd93c" stroke="#b59a1a" stroke-width="1"/><text x="5" y="11.200" font-family="Liberation Sans,sans-serif" font-weight="bold" font-size="8.600" letter-spacing="-0.2" fill="#3a3000">abc</text></g><rect x="12" y="12.500" width="10.500" height="10" rx="1.500" fill="#3a5a7a" stroke="#22405e" stroke-width="0.700"/><path d="M15 19.500a3 3 0 1 1 4.500.3" fill="none" stroke="#fff" stroke-width="1.500"/><path d="M17.500 21.500l3-.5-1.500-2.500z" fill="#fff"/></svg>
<svg class="ic" style="left:885.5px;top:101.0px;width:24px;height:24px" viewBox="0 0 24 24"><g transform="translate(1 1.500)"><path d="M0.500 8l4.500-5.200h15.5v10.400h-15.5z" fill="#efd93c" stroke="#b59a1a" stroke-width="1"/><text x="5" y="11.200" font-family="Liberation Sans,sans-serif" font-weight="bold" font-size="8.600" letter-spacing="-0.2" fill="#3a3000">abc</text></g><rect x="12" y="12.500" width="10.500" height="10" rx="1.500" fill="#d9c23a" stroke="#b59a1a" stroke-width="0.700"/><path d="M14 21l1-3 4.500-4 1.800 1.700-4.500 4.300z" fill="#fff"/></svg>
<div class="vsep" style="left:915px;top:96px;height:33px"></div>
<div class="hdl" style="left:920px;top:101px"></div>
<svg class="ic" style="left:931.0px;top:101.0px;width:24px;height:24px" viewBox="0 0 24 24"><path d="M3 3.500c6-2 12-2 18 0v17c-6 2-12 2-18 0z" fill="#1f8a1f" stroke="#0f5f0f" stroke-width="0.900"/><path d="M3 3.500c6 2 12 2 18 0" stroke="#5fc95f" stroke-width="1" fill="none"/><path d="M6 14c3-3 5-2 8-5" stroke="#9fe89f" stroke-width="1" fill="none"/><path d="M12 14l4-4 3 3-4 4z" fill="#e8f4e8" stroke="#2a5a2a" stroke-width="0.700"/><path d="M9 19l4-3" stroke="#e8f4e8" stroke-width="1.600"/></svg>
<svg class="ic" style="left:961.0px;top:101.0px;width:24px;height:24px" viewBox="0 0 24 24"><text x="1" y="21.500" font-family="Liberation Sans,sans-serif" font-weight="bold" font-size="15.500" fill="#2fae2f" stroke="#0f6f0f" stroke-width="0.700">ID</text><path d="M10 12L20 2.500" stroke="#111" stroke-width="2"/><path d="M22.500 0.500l-8 2 6 6z" fill="#111"/></svg>
<svg class="ic" style="left:993.5px;top:101.0px;width:24px;height:24px" viewBox="0 0 24 24"><rect x="2" y="2.500" width="20" height="19" fill="#3f7f3f" stroke="#1f4f1f" stroke-width="0.900"/><rect x="2.500" y="3" width="19" height="3.500" fill="#2fae2f"/><path d="M5 4.700h13" stroke="#c9f4c9" stroke-width="1"/><rect x="4" y="8" width="17" height="12.500" fill="#6f8f5f"/><path d="M4 16c3-4 5-5 8-3s5-3 9-4v11.500h-17z" fill="#3f5f2f"/><path d="M4 8h17v3c-5 1-12 2-17 0z" fill="#a9c4a0"/></svg>
<svg class="ic" style="left:1024.0px;top:101.0px;width:24px;height:24px" viewBox="0 0 24 24"><path d="M3 5v14c0 2 4 3.500 9 3.500s9-1.500 9-3.500v-14" fill="#5b8fc4" stroke="#2f4f72" stroke-width="1"/><ellipse cx="12" cy="5" rx="9" ry="3.500" fill="#8fb5dc" stroke="#2f4f72" stroke-width="1"/><path d="M3 9.700c0 2 4 3.500 9 3.500s9-1.500 9-3.500M3 14.400c0 2 4 3.500 9 3.500s9-1.500 9-3.500" fill="none" stroke="#2f4f72" stroke-width="1"/></svg>
<div class="vsep" style="left:1054px;top:96px;height:33px"></div>
<div class="hdl" style="left:1059px;top:101px"></div>
<svg class="ic" style="left:1069.0px;top:101.0px;width:24px;height:24px" viewBox="0 0 24 24"><circle cx="11.500" cy="11.500" r="10.500" fill="#a6c8ea" stroke="#55697f" stroke-width="1"/><path d="M11.500 1v21M1 11.500h21M4 5c4.500 2.500 10.500 2.500 15 0M4 18c4.500-2.500 10.500-2.500 15 0M11.500 1c-6.500 5.500-6.500 15.500 0 21M11.500 1c6.500 5.500 6.500 15.500 0 21" fill="none" stroke="#4a5f7a" stroke-width="0.900"/><path d="M4.500 6.500c2.500-1.500 5-.5 4.500 2s-2.500 4-4.500 2.500zM13 12.500c2.500-1.500 6 0 5 3.500s-4 3.500-5 1zM13 4c1.500-1 4-.5 4.500 1.500s-2.500 2-4.500.5z" fill="#3f5878"/><ellipse cx="8" cy="6" rx="4.500" ry="2.800" fill="#fff" fill-opacity="0.450"/><rect x="13" y="14.500" width="9.500" height="8.500" rx="1" fill="#5a6a5a" stroke="#3a4a3a" stroke-width="0.600"/><path d="M14.500 17h6.500l-3.250 4.500z" fill="#111"/></svg>
<svg class="ic" style="left:1100.0px;top:101.0px;width:24px;height:24px" viewBox="0 0 24 24"><circle cx="11.500" cy="11.500" r="10.500" fill="#a6c8ea" stroke="#55697f" stroke-width="1"/><path d="M11.500 1v21M1 11.500h21M4 5c4.500 2.500 10.500 2.500 15 0M4 18c4.500-2.500 10.500-2.500 15 0M11.500 1c-6.500 5.500-6.500 15.500 0 21M11.500 1c6.500 5.500 6.500 15.500 0 21" fill="none" stroke="#4a5f7a" stroke-width="0.900"/><path d="M4.500 6.500c2.500-1.500 5-.5 4.500 2s-2.500 4-4.500 2.500zM13 12.500c2.500-1.500 6 0 5 3.500s-4 3.500-5 1zM13 4c1.500-1 4-.5 4.500 1.500s-2.500 2-4.500.5z" fill="#3f5878"/><ellipse cx="8" cy="6" rx="4.500" ry="2.800" fill="#fff" fill-opacity="0.450"/><rect x="13" y="14" width="9.500" height="9" rx="1.500" fill="#5a9e5a" stroke="#3f7f3f" stroke-width="0.600"/><circle cx="17" cy="17.800" r="2.200" fill="none" stroke="#fff" stroke-width="1.300"/><path d="M18.700 19.500l2.300 2.300" stroke="#fff" stroke-width="1.400"/></svg>
<svg class="ic" style="left:1131.0px;top:101.0px;width:24px;height:24px" viewBox="0 0 24 24"><circle cx="11.500" cy="11.500" r="10.500" fill="#a6c8ea" stroke="#55697f" stroke-width="1"/><path d="M11.500 1v21M1 11.500h21M4 5c4.500 2.500 10.500 2.500 15 0M4 18c4.500-2.500 10.500-2.500 15 0M11.500 1c-6.500 5.500-6.500 15.500 0 21M11.500 1c6.500 5.500 6.500 15.500 0 21" fill="none" stroke="#4a5f7a" stroke-width="0.900"/><path d="M4.500 6.500c2.500-1.500 5-.5 4.500 2s-2.500 4-4.500 2.500zM13 12.500c2.500-1.500 6 0 5 3.500s-4 3.500-5 1zM13 4c1.500-1 4-.5 4.500 1.500s-2.500 2-4.500.5z" fill="#3f5878"/><ellipse cx="8" cy="6" rx="4.500" ry="2.800" fill="#fff" fill-opacity="0.450"/><path d="M2.500 22c-2-2.500 0-7.500 2.500-8.500h3.500l2 3h2l2-3h3.500c2.500 1 4.500 6 2.500 8.500-1.500 1.800-6 1.800-7.500-1h-3c-1.500 2.800-6 2.800-7.500 1z" fill="#0c0c0c"/><ellipse cx="6.200" cy="21" rx="3" ry="1.500" fill="#fff"/><ellipse cx="17.200" cy="21" rx="3" ry="1.500" fill="#fff"/></svg>
<div class="vsep" style="left:1160px;top:96px;height:33px"></div>
<div class="hdl" style="left:1165px;top:101px"></div>
<svg class="ic" style="left:1176.0px;top:101.0px;width:24px;height:24px" viewBox="0 0 24 24"><path d="M11.500 1.500c-4 0-4.500 1.700-4.500 3v2.500h5v1h-7c-2 0-3.500 1.500-3.500 4.500s1.500 4.500 3.500 4.500h2v-2.800c0-2 1.500-3.200 3.500-3.200h4c1.500 0 2.500-1 2.500-2.500v-4c0-1.500-1.500-3-5.500-3z" fill="#3f7fb5"/><circle cx="9.300" cy="4" r="1" fill="#fff"/><path d="M12.500 22.500c4 0 4.500-1.700 4.500-3v-2.500h-5v-1h7c2 0 3.500-1.500 3.500-4.500s-1.500-4.500-3.500-4.500h-2v2.800c0 2-1.500 3.200-3.500 3.200h-4c-1.500 0-2.500 1-2.500 2.500v4c0 1.500 1.500 3 5.500 3z" fill="#f2cf4a"/><path d="M16 17.500l5.500 2.500-5.500 2.500" fill="none" stroke="#222" stroke-width="1.300"/></svg>
<svg class="ic" style="left:1207.5px;top:101.0px;width:24px;height:24px" viewBox="0 0 24 24"><text x="0" y="11.500" font-family="Liberation Sans,sans-serif" font-weight="bold" font-size="10" fill="#2a3a55">KML</text><rect x="14" y="14" width="10" height="10" rx="1.800" fill="#6b9468" stroke="#4f7a4c" stroke-width="0.900"/><path d="M19 16v6M16 19h6" stroke="#fff" stroke-width="2.300"/></svg>
<svg class="ic" style="left:1237.7px;top:101.0px;width:24px;height:24px" viewBox="0 0 24 24"><text x="-2.500" y="10.500" font-family="Liberation Sans,sans-serif" font-weight="bold" font-size="9.500" fill="#111">HTML</text><rect x="12.5" y="14" width="10" height="10" rx="1.200" fill="#e3c846" stroke="#c4a92c" stroke-width="0.900"/><path d="M17.5 15.5v7M14.0 19h7M15.0 16.5l5 5M20.0 16.5l-5 5" stroke="#fffdf0" stroke-width="1.050"/><circle cx="17.5" cy="19" r="1.300" fill="#fffdf0"/></svg>
<svg class="ic" style="left:1269.0px;top:101.0px;width:24px;height:24px" viewBox="0 0 24 24"><path d="M2 7c0-4 4-5 10-5s10 1 10 5v5c0 4-4 5-10 5s-10-1-10-5z" fill="#1e3a6a"/><g fill="#7a9fd0"><rect x="4" y="4" width="4.500" height="4"/><rect x="13" y="4" width="4.500" height="4"/><rect x="8.500" y="8" width="4.500" height="4"/><rect x="17.500" y="8" width="3.500" height="4"/><rect x="4" y="12" width="4.500" height="3.500"/></g><g fill="#c5d6ec"><rect x="8.500" y="4" width="4.500" height="4"/><rect x="13" y="8" width="4.500" height="4"/></g><rect x="14" y="14" width="10" height="10" rx="1.800" fill="#6b9468" stroke="#4f7a4c" stroke-width="0.900"/><path d="M19 16v6M16 19h6" stroke="#fff" stroke-width="2.300"/></svg>
<svg class="ic" style="left:1299.8px;top:101.0px;width:24px;height:24px" viewBox="0 0 24 24"><rect x="2.0" y="1.5" width="4.200" height="4.300" fill="#b9d98a" stroke="#a9a9a9" stroke-width="0.400"/><rect x="7.2" y="1.5" width="4.200" height="4.300" fill="#c9a9e0" stroke="#a9a9a9" stroke-width="0.400"/><rect x="12.4" y="1.5" width="4.200" height="4.300" fill="#f0b9a0" stroke="#a9a9a9" stroke-width="0.400"/><rect x="17.6" y="1.5" width="4.200" height="4.300" fill="#c9a9e0" stroke="#a9a9a9" stroke-width="0.400"/><rect x="2.0" y="6.8" width="4.200" height="4.300" fill="#e0b0d0" stroke="#a9a9a9" stroke-width="0.400"/><rect x="7.2" y="6.8" width="4.200" height="4.300" fill="#b9d98a" stroke="#a9a9a9" stroke-width="0.400"/><rect x="12.4" y="6.8" width="4.200" height="4.300" fill="#a9c9e8" stroke="#a9a9a9" stroke-width="0.400"/><rect x="17.6" y="6.8" width="4.200" height="4.300" fill="#f0b9a0" stroke="#a9a9a9" stroke-width="0.400"/><rect x="2.0" y="12.1" width="4.200" height="4.300" fill="#b9d98a" stroke="#a9a9a9" stroke-width="0.400"/><rect x="7.2" y="12.1" width="4.200" height="4.300" fill="#f0c98a" stroke="#a9a9a9" stroke-width="0.400"/><rect x="12.4" y="12.1" width="4.200" height="4.300" fill="#f0a9a0" stroke="#a9a9a9" stroke-width="0.400"/><rect x="17.6" y="12.1" width="4.200" height="4.300" fill="#a9c9e8" stroke="#a9a9a9" stroke-width="0.400"/><rect x="2.0" y="17.4" width="4.200" height="4.300" fill="#f0a9a0" stroke="#a9a9a9" stroke-width="0.400"/><rect x="7.2" y="17.4" width="4.200" height="4.300" fill="#a9c9e8" stroke="#a9a9a9" stroke-width="0.400"/><rect x="12.4" y="17.4" width="4.200" height="4.300" fill="#c9a9e0" stroke="#a9a9a9" stroke-width="0.400"/><rect x="17.6" y="17.4" width="4.200" height="4.300" fill="#b9d98a" stroke="#a9a9a9" stroke-width="0.400"/></svg>
<svg class="ic" style="left:1330.0px;top:101.0px;width:24px;height:24px" viewBox="0 0 24 24"><rect x="2.500" y="2.500" width="17" height="17" fill="#e4eef8" stroke="#5b86b4" stroke-width="1"/><path d="M8.200 2.500v17M13.800 2.500v17M2.500 8.200h17M2.500 13.800h17" stroke="#5b86b4" stroke-width="1"/><rect x="14" y="14" width="10" height="10" rx="1.200" fill="#e3c846" stroke="#c4a92c" stroke-width="0.900"/><path d="M19 15.5v7M15.5 19h7M16.5 16.5l5 5M21.5 16.5l-5 5" stroke="#fffdf0" stroke-width="1.050"/><circle cx="19" cy="19" r="1.300" fill="#fffdf0"/></svg>
<div class="vsep" style="left:1361px;top:96px;height:33px"></div>
<div class="hdl" style="left:1366px;top:101px"></div>
<svg class="ic" style="left:1376.4px;top:101.0px;width:24px;height:24px" viewBox="0 0 24 24"><rect x="3.500" y="1.500" width="18" height="21" rx="1" fill="#5b86b4" stroke="#1f3550" stroke-width="1"/><rect x="3.500" y="1.500" width="4.500" height="21" fill="#22344c"/><text x="10.500" y="17" font-family="Liberation Sans,sans-serif" font-size="13" fill="#fff">?</text></svg>
<div class="vsep" style="left:1405px;top:96px;height:33px"></div>
<div class="hdl" style="left:1410px;top:101px"></div>
<svg class="ic" style="left:1423.0px;top:102.0px;width:24px;height:24px" viewBox="0 0 24 24"><path d="M12.500 0.500v23M1 12.500h23" stroke="#2a2a2a" stroke-width="1"/><circle cx="12.500" cy="12.500" r="4.500" fill="none" stroke="#8a3434" stroke-width="1.200" stroke-dasharray="3.500 1.800" stroke-dashoffset="1"/><circle cx="12.500" cy="12.500" r="1" fill="#f4f4f4"/></svg>
<svg class="ic" style="left:16.0px;top:135.0px;width:24px;height:24px" viewBox="0 0 24 24"><path d="M3 21V5l16 16z" fill="#e2e2e2" stroke="#cdcdcd"/><path d="M6.500 17.500v-5l5 5z" fill="#f0f0f0" stroke="#cdcdcd" stroke-width="0.800"/><path d="M14 2h5v17h-5z" fill="#e6e6e6" stroke="#d0d0d0" stroke-width="0.800"/></svg>
<svg class="ic" style="left:47.0px;top:135.0px;width:24px;height:24px" viewBox="0 0 24 24"><path d="M2 7c0-4 5-5 8-3.500 3 1.500 5-1.500 9-0.500 3 1 3 5 1 7-2 2-5 0-8 1.500-3 1.500-4 3.500-7 2-2-1-3-4-3-6.500z" fill="#d8d8d8" stroke="#c6c6c6" stroke-width="1"/><path d="M5 7.500c1-2 4-2 6-1s5-1 7 0" fill="none" stroke="#cacaca" stroke-width="0.800"/><rect x="12.500" y="12.500" width="10" height="10" rx="1.500" fill="#cfcfcf"/><path d="M17.500 14.500v6M14.500 17.500h6" stroke="#f0f0f0" stroke-width="2.200"/></svg>
<svg class="ic" style="left:93.0px;top:135.0px;width:24px;height:24px" viewBox="0 0 24 24"><path d="M2 7c0-4 5-5 8-3.500 3 1.500 5-1.500 9-0.500 3 1 3 5 1 7-2 2-5 0-8 1.500-3 1.500-4 3.500-7 2-2-1-3-4-3-6.500z" fill="#d8d8d8" stroke="#c6c6c6" stroke-width="1"/><path d="M5 7.500c1-2 4-2 6-1s5-1 7 0" fill="none" stroke="#cacaca" stroke-width="0.800"/><rect x="12.500" y="12.500" width="10" height="10" rx="1.500" fill="#cfcfcf"/><path d="M15.500 19.500a2.600 2.600 0 1 1 3.500.5" fill="none" stroke="#f0f0f0" stroke-width="1.500"/></svg>
<svg class="ic" style="left:124.0px;top:135.0px;width:24px;height:24px" viewBox="0 0 24 24"><path d="M2 7c0-4 5-5 8-3.500 3 1.500 5-1.500 9-0.500 3 1 3 5 1 7-2 2-5 0-8 1.500-3 1.500-4 3.500-7 2-2-1-3-4-3-6.500z" fill="#d8d8d8" stroke="#c6c6c6" stroke-width="1"/><path d="M5 7.500c1-2 4-2 6-1s5-1 7 0" fill="none" stroke="#cacaca" stroke-width="0.800"/><path d="M10 13.500l5-2.500 5 2.500v6l-5 2.500-5-2.500z" fill="#e0e0e0" stroke="#cfcfcf"/></svg>
<svg class="ic" style="left:155.0px;top:135.0px;width:24px;height:24px" viewBox="0 0 24 24"><path d="M2 7c0-4 5-5 8-3.500 3 1.500 5-1.500 9-0.500 3 1 3 5 1 7-2 2-5 0-8 1.500-3 1.500-4 3.500-7 2-2-1-3-4-3-6.500z" fill="#d8d8d8" stroke="#c6c6c6" stroke-width="1"/><path d="M5 7.500c1-2 4-2 6-1s5-1 7 0" fill="none" stroke="#cacaca" stroke-width="0.800"/><rect x="13.5" y="13.5" width="10" height="10" rx="1.500" fill="#cfcfcf"/><path d="M18.5 15.3v6.400M15.3 18.5h6.400M16.2 16.2l4.600 4.600M20.8 16.2l-4.600 4.600" stroke="#f0f0f0" stroke-width="1.500"/></svg>
<svg class="ic" style="left:186.0px;top:135.0px;width:24px;height:24px" viewBox="0 0 24 24"><path d="M2 7c0-4 5-5 8-3.500 3 1.500 5-1.500 9-0.500 3 1 3 5 1 7-2 2-5 0-8 1.500-3 1.500-4 3.500-7 2-2-1-3-4-3-6.500z" fill="#d8d8d8" stroke="#c6c6c6" stroke-width="1"/><path d="M5 7.500c1-2 4-2 6-1s5-1 7 0" fill="none" stroke="#cacaca" stroke-width="0.800"/><path d="M2 19c1-3 4-5 6-4s1 5-1 6-5 0-5-2z" fill="#d9d9d9"/><rect x="13.5" y="13.5" width="10" height="10" rx="1.500" fill="#cfcfcf"/><path d="M18.5 15.3v6.400M15.3 18.5h6.400M16.2 16.2l4.600 4.600M20.8 16.2l-4.600 4.600" stroke="#f0f0f0" stroke-width="1.500"/></svg>
<svg class="ic" style="left:217.0px;top:135.0px;width:24px;height:24px" viewBox="0 0 24 24"><path d="M2 7c0-4 5-5 8-3.500 3 1.500 5-1.500 9-0.500 3 1 3 5 1 7-2 2-5 0-8 1.500-3 1.500-4 3.500-7 2-2-1-3-4-3-6.500z" fill="#d8d8d8" stroke="#c6c6c6" stroke-width="1"/><path d="M5 7.500c1-2 4-2 6-1s5-1 7 0" fill="none" stroke="#cacaca" stroke-width="0.800"/><rect x="13.5" y="13.5" width="10" height="10" rx="1.500" fill="#cfcfcf"/><path d="M18.5 15.3v6.400M15.3 18.5h6.400M16.2 16.2l4.600 4.600M20.8 16.2l-4.600 4.600" stroke="#f0f0f0" stroke-width="1.500"/></svg>
<svg class="ic" style="left:248.0px;top:135.0px;width:24px;height:24px" viewBox="0 0 24 24"><path d="M2 7c0-4 5-5 8-3.500 3 1.500 5-1.500 9-0.500 3 1 3 5 1 7-2 2-5 0-8 1.500-3 1.500-4 3.500-7 2-2-1-3-4-3-6.500z" fill="#d8d8d8" stroke="#c6c6c6" stroke-width="1"/><path d="M5 7.500c1-2 4-2 6-1s5-1 7 0" fill="none" stroke="#cacaca" stroke-width="0.800"/><rect x="12.5" y="12.5" width="10" height="10" rx="1.500" fill="#cfcfcf"/><path d="M15.0 15.0l5 5M20.0 15.0l-5 5" stroke="#f0f0f0" stroke-width="1.800"/></svg>
<svg class="ic" style="left:279.0px;top:135.0px;width:24px;height:24px" viewBox="0 0 24 24"><path d="M2 7c0-4 5-5 8-3.500 3 1.500 5-1.500 9-0.500 3 1 3 5 1 7-2 2-5 0-8 1.500-3 1.500-4 3.500-7 2-2-1-3-4-3-6.500z" fill="#d8d8d8" stroke="#c6c6c6" stroke-width="1"/><path d="M5 7.500c1-2 4-2 6-1s5-1 7 0" fill="none" stroke="#cacaca" stroke-width="0.800"/><path d="M2 19c1-3 4-5 6-4s1 5-1 6-5 0-5-2z" fill="#d9d9d9"/><rect x="12.5" y="12.5" width="10" height="10" rx="1.500" fill="#cfcfcf"/><path d="M15.0 15.0l5 5M20.0 15.0l-5 5" stroke="#f0f0f0" stroke-width="1.800"/></svg>
<svg class="ic" style="left:309.0px;top:135.0px;width:24px;height:24px" viewBox="0 0 24 24"><path d="M3 5c3-3 8-2 12-1.500 4 .5 7 2 5 5-2 2.500-6 1.500-8 4s-1 7-4 8-4-2-4.500-6-2.500-7-.5-9.500z" fill="#dcdcdc" stroke="#cfcfcf"/></svg>
<svg class="ic" style="left:340.0px;top:135.0px;width:24px;height:24px" viewBox="0 0 24 24"><path d="M3 17c0-5 5-7 8-10s6-5 9-3 1 7-2 10-6 3-8 5.500-7 2.500-7-2.500z" fill="#dadada" stroke="#cdcdcd"/><path d="M6 16.500c1-4 5-5 7-7.500" stroke="#e9e9e9" stroke-width="1.200" fill="none"/></svg>
<svg class="ic" style="left:371.0px;top:135.0px;width:24px;height:24px" viewBox="0 0 24 24"><path d="M2.500 3.500l5.500 13 7-11h6" fill="none" stroke="#d2d2d2" stroke-width="1.100"/><circle cx="15" cy="5.500" r="1.600" fill="#ececec" stroke="#d0d0d0"/><rect x="12.500" y="12.500" width="10" height="10" rx="1" fill="#ececec" stroke="#cfcfcf" stroke-dasharray="2 1.200"/><path d="M15 20l5-5" stroke="#d2d2d2" stroke-width="1.300"/></svg>
<svg class="ic" style="left:402.0px;top:135.0px;width:24px;height:24px" viewBox="0 0 24 24"><path d="M10.500 1v22M2 12h15" stroke="#d2d2d2" stroke-width="1.200"/><rect x="14.500" y="2.500" width="6" height="6" fill="#ececec" stroke="#cfcfcf"/><rect x="3.500" y="15.500" width="6" height="6" fill="#ececec" stroke="#cfcfcf"/><circle cx="10.500" cy="12" r="2.300" fill="#dcdcdc"/><path d="M16.500 11v11" stroke="#d6d6d6" stroke-width="1.100"/></svg>
<svg class="ic" style="left:433.0px;top:135.0px;width:24px;height:24px" viewBox="0 0 24 24"><path d="M2 6c1-3.500 5.500-4.500 9.500-2.500s8-1 10.500 1.500-.5 7-4.500 7-6-1-9 0-7.500-2-6.500-6z" fill="#dadada" stroke="#cecece"/><path d="M9 9l6 10M15 9l-6 10" stroke="#cfcfcf" stroke-width="1.600"/><circle cx="8" cy="20.500" r="2.200" fill="none" stroke="#cfcfcf" stroke-width="1.400"/><circle cx="16" cy="20.500" r="2.200" fill="none" stroke="#cfcfcf" stroke-width="1.400"/></svg>
<svg class="ic" style="left:464.0px;top:135.0px;width:24px;height:24px" viewBox="0 0 24 24"><path d="M2 6c1-3.500 5.500-4.500 9.500-2.500s8-1 10.500 1.500-.5 7-4.500 7-6-1-9 0-7.500-2-6.500-6z" fill="#dadada" stroke="#cecece"/><path d="M9 9l6 10M15 9l-6 10" stroke="#cfcfcf" stroke-width="1.600"/><circle cx="8" cy="20.500" r="2.200" fill="none" stroke="#cfcfcf" stroke-width="1.400"/><circle cx="16" cy="20.500" r="2.200" fill="none" stroke="#cfcfcf" stroke-width="1.400"/></svg>
<svg class="ic" style="left:496.0px;top:135.0px;width:24px;height:24px" viewBox="0 0 24 24"><path d="M2 8c0-4 5-5.500 10-4s10-.5 10 4-5 6-8 6-4 2-7 1.500-5-3.500-5-7.500z" fill="#dadada" stroke="#cecece"/><path d="M8 6h8M8 8.500h8M8 11h8" stroke="#ececec" stroke-width="1"/><path d="M6 13c2 3 5 6 7 9" stroke="#d0d0d0" stroke-width="1.200" fill="none"/></svg>
<svg class="ic" style="left:528.0px;top:135.0px;width:24px;height:24px" viewBox="0 0 24 24"><path d="M3 4.500h18M3 8.500h18M3 12.500h18M3 16.500h18M3 20.500h18" stroke="#dadada" stroke-width="1"/><path d="M12 3v19M9 6.500l3 2.500 3-2.500M9 18.500l3-2.500 3 2.500" stroke="#cfcfcf" stroke-width="1.200" fill="none"/></svg>
<svg class="ic" style="left:558.0px;top:135.0px;width:24px;height:24px" viewBox="0 0 24 24"><path d="M9 21l3-16 9 6-9 5" fill="#e9e9e9" stroke="#cfcfcf" stroke-width="1.100"/><path d="M7 19a8 8 0 0 1 2-13" fill="none" stroke="#d0d0d0" stroke-width="1.600"/><path d="M6.500 3l5 2-4 3.500z" fill="#d0d0d0"/></svg>
<div class="dd g" style="left:77.5px;top:145.5px"></div>
<div class="dd g" style="left:589.5px;top:145.5px"></div>
<svg class="ic" style="left:15.5px;top:168.5px;width:24px;height:24px" viewBox="0 0 24 24"><path d="M2 3l7-1.500 6 1.500 6-1v8l1.500 5-2.500 6-8 1-9-1.500 1-7z" fill="#c4e8b0"/><path d="M3 9l6-4 6 4 6-4M4 21l5-8 7 3 5-5" stroke="#e6f6dc" stroke-width="2" fill="none"/><path d="M8 8c2-2 6-1 6 2s-4 4-6 2z" fill="#a9cfe6" fill-opacity="0.800"/><path d="M5 14l5 3-4 3z" fill="#9fd88a"/><path d="M12.500 16.500l3 4.500 6.500-9" stroke="#3f8a2a" stroke-width="1.600" fill="none"/><path d="M14 13l7 8M21 14l-6 7" stroke="#5fa04a" stroke-width="0.800" fill="none"/></svg>
<svg class="ic" style="left:47.0px;top:168.5px;width:24px;height:24px" viewBox="0 0 24 24"><path d="M2 4l19-1.500 1 10-2 9-17 .500-1.500-8z" fill="#f4ecc4"/><rect x="2.500" y="3.500" width="5.500" height="5" fill="#4fb04f"/><path d="M3 14l6-2 4 5 7-4" stroke="#f0b0c0" stroke-width="2.200" fill="none"/><path d="M4 19l6-1 3 3" stroke="#c9b0e0" stroke-width="2" fill="none"/><path d="M13 8l5 4 3-1" stroke="#f4e070" stroke-width="2.400" fill="none"/><path d="M9 6c4 2 8 8 12 15" stroke="#6a9fd4" stroke-width="2.800" fill="none"/><path d="M12.500 14L20 2.500" stroke="#7a3f1a" stroke-width="3" stroke-linecap="round"/><path d="M9.500 19.500l3.500-6 1.800 1.200z" fill="#c0a040"/><path d="M9 5l3-2 1 3z" fill="#3f7fc4"/></svg>
<div class="vsep" style="left:76px;top:164px;height:33px"></div>
<div class="hdl" style="left:81px;top:169px"></div>
<svg class="ic" style="left:93.5px;top:170.0px;width:21px;height:21px" viewBox="0 0 24 24"><path d="M4.500 13h3.500l1-2h6l1 2h3.500v9.500h-15z" fill="#111"/><circle cx="12" cy="17.500" r="3.300" fill="#fff"/><circle cx="12" cy="17.500" r="2" fill="#111"/><circle cx="12" cy="17.500" r="0.800" fill="#fff"/><path d="M12 10V4" stroke="#111" stroke-width="2"/><path d="M8.500 5.500l3.500-4 3.500 4z" fill="#111"/></svg>
<svg class="ic" style="left:123.0px;top:169.0px;width:24px;height:24px" viewBox="0 0 24 24"><rect x="2" y="2" width="17" height="15" fill="#fff" stroke="#111" stroke-width="2.200" stroke-dasharray="3 1.800"/><path d="M4.500 14.500l4-6 3 3.500 2.500-2.500 3 5z" fill="#222"/><rect x="4.500" y="4.500" width="12" height="10" fill="#3a3a3a" fill-opacity="0.700"/><path d="M4.500 14.500l4-5 3 3 2.500-2 3 4z" fill="#e8e8e8"/><path transform="translate(13 11) scale(1)" d="M0 0v11.500l2.800-2.500 2 4.500 2-.9-2-4.400h3.700z" fill="#fff" stroke="#222" stroke-width="1" stroke-linejoin="round"/></svg>
<div class="abs" style="left:6px;top:201px;width:40px;height:3px;background-image:radial-gradient(circle,#b9b9b9 1px,transparent 1.300px);background-size:4px 3px"></div>
<div class="abs" style="left:3px;top:419px;width:46px;height:30px;background:#cde4f7"></div>
<svg class="ic" style="left:6.0px;top:211.0px;width:24px;height:24px" viewBox="0 0 24 24"><path d="M2 3l6.800 14 6.800-14.500h6" fill="none" stroke="#333" stroke-width="1.200"/><circle cx="2.200" cy="3" r="1.700" fill="#fff" stroke="#333" stroke-width="0.900"/><circle cx="8.800" cy="17.500" r="1.700" fill="#fff" stroke="#333" stroke-width="0.900"/><circle cx="15.600" cy="2.500" r="1.700" fill="#fff" stroke="#333" stroke-width="0.900"/><circle cx="21.500" cy="2.500" r="1.700" fill="#fff" stroke="#333" stroke-width="0.900"/><rect x="14" y="14" width="10" height="10" rx="1.800" fill="#6b9468" stroke="#4f7a4c" stroke-width="0.900"/><path d="M19 16v6M16 19h6" stroke="#fff" stroke-width="2.300"/></svg>
<svg class="ic" style="left:6.0px;top:242.0px;width:24px;height:24px" viewBox="0 0 24 24"><rect x="1.5" y="1.5" width="6" height="6" fill="#1e3a6a"/><rect x="7.5" y="1.5" width="6" height="6" fill="#4a7fb5"/><rect x="13.5" y="1.5" width="6" height="6" fill="#1e3a6a"/><rect x="1.5" y="7.5" width="6" height="6" fill="#c5d6ec"/><rect x="7.5" y="7.5" width="6" height="6" fill="#4a7fb5"/><rect x="13.5" y="7.5" width="6" height="6" fill="#1e3a6a"/><rect x="1.5" y="13.5" width="6" height="6" fill="#4a7fb5"/><rect x="7.5" y="13.5" width="6" height="6" fill="#c5d6ec"/><rect x="13.5" y="13.5" width="6" height="6" fill="#1e3a6a"/><rect x="14" y="14" width="10" height="10" rx="1.800" fill="#6b9468" stroke="#4f7a4c" stroke-width="0.900"/><path d="M19 16v6M16 19h6" stroke="#fff" stroke-width="2.300"/></svg>
<svg class="ic" style="left:6.0px;top:273.0px;width:24px;height:24px" viewBox="0 0 24 24"><rect x="1.500" y="1.500" width="20" height="20" fill="#a9c4e2" stroke="#2f5580" stroke-width="1.100"/><path d="M1.500 1.500l10 10 10-10M11.500 1.500v20M1.500 11.500h20" stroke="#2f5580" stroke-width="1" fill="none"/><rect x="14" y="14" width="10" height="10" rx="1.800" fill="#6b9468" stroke="#4f7a4c" stroke-width="0.900"/><path d="M19 16v6M16 19h6" stroke="#fff" stroke-width="2.300"/></svg>
<svg class="ic" style="left:6.0px;top:303.0px;width:24px;height:24px" viewBox="0 0 24 24"><path d="M5.500 2c5-1 8 2 7 6s-5 7-9 8c3-2 5-4 5-6-3 1-5-1-5-3.500s1-4 2-4.500z" fill="#3f6fa3"/><rect x="14" y="14" width="10" height="10" rx="1.800" fill="#6b9468" stroke="#4f7a4c" stroke-width="0.900"/><path d="M19 16v6M16 19h6" stroke="#fff" stroke-width="2.300"/></svg>
<svg class="ic" style="left:6.0px;top:334.0px;width:24px;height:24px" viewBox="0 0 24 24"><path d="M2.500 21.500c2-9 8-16 18.500-19-1 6-6 13-15 15z" fill="#7aa7d6" stroke="#3f6fa3" stroke-width="1"/><path d="M3 21c4-7 9-12 16-16.500" stroke="#3f6fa3" stroke-width="1" fill="none"/><rect x="14" y="14" width="10" height="10" rx="1.800" fill="#6b9468" stroke="#4f7a4c" stroke-width="0.900"/><path d="M19 16v6M16 19h6" stroke="#fff" stroke-width="2.300"/></svg>
<svg class="ic" style="left:6.0px;top:364.0px;width:24px;height:24px" viewBox="0 0 24 24"><rect x="1.500" y="1.500" width="21" height="21" rx="2" fill="#a9c4e2" stroke="#5b86b4" stroke-width="1.100"/><path d="M5.500 4.500l5.500 13 7-13" fill="none" stroke="#2a3f5a" stroke-width="1.200"/><circle cx="5.500" cy="4.500" r="1.700" fill="#fff" stroke="#2a3f5a"/><circle cx="11" cy="17.500" r="1.700" fill="#fff" stroke="#2a3f5a"/><circle cx="18" cy="4.500" r="1.700" fill="#fff" stroke="#2a3f5a"/><rect x="14" y="14" width="10" height="10" rx="1.800" fill="#6b9468" stroke="#4f7a4c" stroke-width="0.900"/><path d="M19 16v6M16 19h6" stroke="#fff" stroke-width="2.300"/></svg>
<svg class="ic" style="left:6.0px;top:394.0px;width:24px;height:24px" viewBox="0 0 24 24"><path d="M4 3c3-2.500 9-2.500 12 0 3 2.500 2 8 0 10l-1 5h-2.500l-.5-4h-3l-.5 6h-3l-.5-7c-3-2-4-7-1-10z" fill="#3f6f9f" stroke="#22405e" stroke-width="0.900"/><circle cx="7.500" cy="6.500" r="1" fill="#fff"/><path d="M16 6c2 0 3 2 2 4" stroke="#22405e" fill="none"/><rect x="14" y="14" width="10" height="10" rx="1.800" fill="#6b9468" stroke="#4f7a4c" stroke-width="0.900"/><path d="M19 16v6M16 19h6" stroke="#fff" stroke-width="2.300"/></svg>
<svg class="ic" style="left:6.0px;top:423.0px;width:24px;height:24px" viewBox="0 0 24 24"><circle cx="11.500" cy="11.500" r="10.500" fill="#a6c8ea" stroke="#55697f" stroke-width="1"/><path d="M11.500 1v21M1 11.500h21M4 5c4.500 2.500 10.500 2.500 15 0M4 18c4.500-2.500 10.500-2.500 15 0M11.500 1c-6.500 5.500-6.500 15.500 0 21M11.500 1c6.500 5.500 6.500 15.500 0 21" fill="none" stroke="#4a5f7a" stroke-width="0.900"/><path d="M4.500 6.500c2.500-1.500 5-.5 4.500 2s-2.500 4-4.500 2.500zM13 12.500c2.500-1.500 6 0 5 3.500s-4 3.500-5 1zM13 4c1.500-1 4-.5 4.500 1.500s-2.500 2-4.500.5z" fill="#3f5878"/><ellipse cx="8" cy="6" rx="4.500" ry="2.800" fill="#fff" fill-opacity="0.450"/><rect x="14" y="14" width="10" height="10" rx="1.800" fill="#6b9468" stroke="#4f7a4c" stroke-width="0.900"/><path d="M19 16v6M16 19h6" stroke="#fff" stroke-width="2.300"/></svg>
<svg class="ic" style="left:6.0px;top:453.0px;width:24px;height:24px" viewBox="0 0 24 24"><circle cx="11" cy="11" r="9.500" fill="#3a6a9f" stroke="#1f3f66" stroke-width="1"/><path d="M11 1.500v19M1.500 11h19M3 6.500h16M3 15.500h16M11 1.500c-6 5-6 14 0 19M11 1.500c6 5 6 14 0 19" fill="none" stroke="#e9f0f8" stroke-width="1.100"/><rect x="14" y="14" width="10" height="10" rx="1.800" fill="#6b9468" stroke="#4f7a4c" stroke-width="0.900"/><path d="M19 16v6M16 19h6" stroke="#fff" stroke-width="2.300"/></svg>
<svg class="ic" style="left:6.0px;top:482.0px;width:24px;height:24px" viewBox="0 0 24 24"><circle cx="11" cy="11" r="9.500" fill="#d6e4f2" stroke="#5b6f86" stroke-width="1"/><path d="M11 1.500v19M1.500 11h19M11 1.500c-6 5-6 14 0 19M11 1.500c6 5 6 14 0 19" fill="none" stroke="#8aa0b8" stroke-width="0.800"/><path d="M5 6l5 11 6-10" fill="none" stroke="#333" stroke-width="1.100"/><circle cx="5" cy="6" r="1.500" fill="#fff" stroke="#333" stroke-width="0.800"/><circle cx="10" cy="17" r="1.500" fill="#fff" stroke="#333" stroke-width="0.800"/><circle cx="16" cy="7" r="1.500" fill="#fff" stroke="#333" stroke-width="0.800"/><rect x="14" y="14" width="10" height="10" rx="1.800" fill="#6b9468" stroke="#4f7a4c" stroke-width="0.900"/><path d="M19 16v6M16 19h6" stroke="#fff" stroke-width="2.300"/></svg>
<svg class="ic" style="left:6.0px;top:513.0px;width:24px;height:24px" viewBox="0 0 24 24"><path d="M2 3l6.800 14 6.800-14.500h6" fill="none" stroke="#333" stroke-width="1.200"/><circle cx="2.200" cy="3" r="1.700" fill="#fff" stroke="#333" stroke-width="0.900"/><circle cx="8.800" cy="17.500" r="1.700" fill="#fff" stroke="#333" stroke-width="0.900"/><circle cx="15.600" cy="2.500" r="1.700" fill="#fff" stroke="#333" stroke-width="0.900"/><circle cx="21.500" cy="2.500" r="1.700" fill="#fff" stroke="#333" stroke-width="0.900"/><rect x="14" y="14" width="10" height="10" rx="1.200" fill="#e3c846" stroke="#c4a92c" stroke-width="0.900"/><path d="M19 15.5v7M15.5 19h7M16.5 16.5l5 5M21.5 16.5l-5 5" stroke="#fffdf0" stroke-width="1.050"/><circle cx="19" cy="19" r="1.300" fill="#fffdf0"/></svg>
<svg class="ic" style="left:13.0px;top:544.0px;width:24px;height:24px" viewBox="0 0 24 24"><rect x="2.500" y="2.500" width="19" height="18" fill="#3f6fa3" stroke="#2a4f7a" stroke-width="1"/><path d="M2.500 7h19M2.500 11.500h19M2.500 16h19M7.500 2.500v18M12.500 2.500v18M17.500 2.500v18" stroke="#c5d6ec" stroke-width="1"/><rect x="14" y="14" width="10" height="10" rx="1.800" fill="#6b9468" stroke="#4f7a4c" stroke-width="0.900"/><path d="M19 16v6M16 19h6" stroke="#fff" stroke-width="2.300"/></svg>
<div class="dd" style="left:36.5px;top:403.5px"></div>
<div class="dd" style="left:36.5px;top:432.5px"></div>
<div class="dd" style="left:36.5px;top:491.5px"></div>
<div class="dd" style="left:36.5px;top:522.5px"></div>
<svg class="ic" style="left:55.2px;top:236.3px;width:17px;height:17px" viewBox="0 0 24 24"><path d="M2 15l7-7 6 6-7 7z" fill="#d9432e"/><path d="M5 12l7-7 6 6-7 7z" fill="#ef8a2e"/><path d="M9 8l5-5 6 6-5 5z" fill="#f2c83a"/><path d="M8 19L21 4" stroke="#7a4a2a" stroke-width="2.200" stroke-linecap="round"/><path d="M3 17l5 4" stroke="#b03020" stroke-width="2"/></svg>
<svg class="ic" style="left:78.0px;top:236.3px;width:17px;height:17px" viewBox="0 0 24 24"><path d="M3 9h4v10h9v3h-13z" fill="#e9e9e9" stroke="#8a8a8a"/><path d="M7 5h4v-3h5v3h4v13h-13z" fill="#f4f4f4" stroke="#6a6a6a"/><path d="M11.500 7v8h4.500v-8" fill="none" stroke="#6a6a6a"/><rect x="14" y="14" width="8.500" height="8.500" rx="1" fill="#5a9e5a"/><path d="M18.250 15.500v5.500M15.500 18.250h5.500" stroke="#fff" stroke-width="1.800"/></svg>
<svg class="ic" style="left:101.2px;top:236.3px;width:17px;height:17px" viewBox="0 0 24 24"><path d="M1.500 11c4-6 14-6 18 0-4 6-14 6-18 0z" fill="#f4f4f4" stroke="#7a7a7a" stroke-width="1.100"/><circle cx="10.500" cy="11" r="3.600" fill="#8a9aaa" stroke="#4a5a6a" stroke-width="0.800"/><circle cx="10.500" cy="11" r="1.500" fill="#222"/><path d="M14 16h8l-4 5z" fill="#111"/></svg>
<svg class="ic" style="left:124.0px;top:236.3px;width:17px;height:17px" viewBox="0 0 24 24"><path d="M2.500 3.500h19l-7 8.500v9.500l-5-2.500v-7z" fill="#6a9ab8" stroke="#4a7a98" stroke-width="1"/><path d="M2.500 3.500h19l-2.200 2.700h-14.600z" fill="#e8cf6a" stroke="#b9a24a" stroke-width="0.800"/></svg>
<svg class="ic" style="left:145.5px;top:236.3px;width:17px;height:17px" viewBox="0 0 24 24"><text x="0" y="16" font-family="Liberation Serif,serif" font-size="23" fill="#5a3a66">ε</text><path d="M11 13h11l-1.500 9h-2.500v-4h-3v4h-2.500z" fill="#d9d9d9" stroke="#a9a9a9" stroke-width="0.800"/></svg>
<svg class="ic" style="left:185.5px;top:236.3px;width:17px;height:17px" viewBox="0 0 24 24"><rect x="4" y="4" width="5" height="5" fill="#f9e9c9" stroke="#e0a040"/><rect x="4" y="14" width="5" height="5" fill="#f9e9c9" stroke="#e0a040"/><path d="M2.500 2v19" stroke="#c9b9a0" stroke-width="0.800"/><path d="M13.500 2.500h5v10h3.500l-6 8.500-6-8.500h3.500z" fill="#5b86c0" stroke="#3f6a9f" stroke-width="0.800"/></svg>
<svg class="ic" style="left:209.3px;top:236.3px;width:17px;height:17px" viewBox="0 0 24 24"><rect x="4" y="8" width="5" height="5" fill="#f9e9c9" stroke="#e0a040"/><rect x="4" y="16" width="5" height="5" fill="#f9e9c9" stroke="#e0a040"/><path d="M2.500 4v18" stroke="#c9b9a0" stroke-width="0.800"/><path d="M13.500 21.500h5v-10h3.500l-6-8.500-6 8.500h3.500z" fill="#5b86c0" stroke="#3f6a9f" stroke-width="0.800"/></svg>
<svg class="ic" style="left:231.5px;top:236.3px;width:17px;height:17px" viewBox="0 0 24 24"><rect x="3.500" y="3.500" width="15" height="15" fill="#fbfbfb" stroke="#9a6a6a" stroke-width="1.100"/><rect x="13" y="14" width="9.500" height="8" rx="1.500" fill="#d9534a" stroke="#b03a32" stroke-width="0.700"/><path d="M15 18h5.500" stroke="#fff" stroke-width="1.800"/></svg>
<div class="dd" style="left:170.5px;top:243.0px"></div>
<div id="panelhdr" class="abs"></div>
<div class="tx " style="left:56.3px;top:208.5px;letter-spacing:-0.523px;font-size:14.8px;color:#111;">Layer</div>
<svg class="abs" style="left:439px;top:203px" width="44" height="22" viewBox="0 0 44 22"><path d="M2.200 8.500h9.600v10h-9.600zM6.200 8V3.500h10v9.500h-4" fill="none" stroke="#2a2a2a" stroke-width="2"/><path d="M1.200 8h11.600M5.200 3.200h12" stroke="#2a2a2a" stroke-width="3"/><path d="M27.200 5.200l13.600 13.600M40.800 5.200l-13.600 13.600" stroke="#2a2a2a" stroke-width="3.300"/></svg>
<div class="abs" style="left:488px;top:199px;width:4px;height:797px;background:#f9f9f9"></div>
<div id="tree" class="abs">
<div class="cb" style="left:27px;top:5.0px;border-color:#333"><svg width="13" height="13" viewBox="0 0 13 13"><path d="M2.2 6.6l3 3.2 5.8-7" fill="none" stroke="#222" stroke-width="1.3"/></svg></div>
<svg class="abs" style="left:50px;top:4.0px" width="17" height="17" viewBox="0 0 17 17"><circle cx="8.5" cy="8.5" r="7.3" fill="#fff" stroke="#111" stroke-width="1.2"/><circle cx="8.5" cy="8.5" r="2.2" fill="#111"/></svg>
<div class="tx " style="left:75px;top:5.7px;font-size:14.4px;color:#000;font-weight:bold;letter-spacing:0.162px;">Funde_WT_2017_2019</div>
<svg class="abs" style="left:8px;top:30.5px" width="8" height="12" viewBox="0 0 8 12"><path d="M1.5 1l5 5-5 5" fill="none" stroke="#9b9b9b" stroke-width="1.9"/></svg>
<div class="cb" style="left:27px;top:29.0px;border-color:#333"><svg width="13" height="13" viewBox="0 0 13 13"><path d="M2.2 6.6l3 3.2 5.8-7" fill="none" stroke="#222" stroke-width="1.3"/></svg></div>
<svg class="abs" style="left:50px;top:26.5px" width="17" height="18" viewBox="0 0 17 18"><path d="M1.5 8.5h3v7h7v2h-10z" fill="#e9e9e9" stroke="#a9a9a9"/><path d="M4.5 4.5h3v-3h4v3h3v10h-10z" fill="#efefef" stroke="#8e8e8e"/><path d="M8 6v6.5h3.5V6" fill="none" stroke="#8e8e8e"/></svg>
<div class="tx " style="left:75px;top:29.7px;font-size:14.4px;color:#000;letter-spacing:-0.077px;">Gebiet_und_Wege</div>
<svg class="abs" style="left:8px;top:54.5px" width="8" height="12" viewBox="0 0 8 12"><path d="M1.5 1l5 5-5 5" fill="none" stroke="#9b9b9b" stroke-width="1.9"/></svg>
<div class="cb" style="left:27px;top:53.0px;border-color:#333"></div>
<svg class="abs" style="left:51px;top:52.0px" width="17" height="17" viewBox="0 0 16.5 16.5"><rect x="0.0" y="0.0" width="5.5" height="5.5" fill="#1e3a5f"/><rect x="5.5" y="0.0" width="5.5" height="5.5" fill="#dfe6ee"/><rect x="11.0" y="0.0" width="5.5" height="5.5" fill="#1e3a5f"/><rect x="0.0" y="5.5" width="5.5" height="5.5" fill="#dfe6ee"/><rect x="5.5" y="5.5" width="5.5" height="5.5" fill="#3d6a9d"/><rect x="11.0" y="5.5" width="5.5" height="5.5" fill="#dfe6ee"/><rect x="0.0" y="11.0" width="5.5" height="5.5" fill="#1e3a5f"/><rect x="5.5" y="11.0" width="5.5" height="5.5" fill="#9fb6cf"/><rect x="11.0" y="11.0" width="5.5" height="5.5" fill="#c5d3e2"/></svg>
<div class="tx " style="left:75px;top:53.7px;font-size:14.4px;color:#8a8a8a;font-weight:bold;font-style:italic;letter-spacing:0.24px;">WMS LGRB-BW BK50: Bodenkarte 1 : 50 000 (Geologie)</div>
<svg class="abs" style="left:8px;top:78.5px" width="8" height="12" viewBox="0 0 8 12"><path d="M1.5 1l5 5-5 5" fill="none" stroke="#9b9b9b" stroke-width="1.9"/></svg>
<div class="cb" style="left:27px;top:77.0px;border-color:#333"></div>
<svg class="abs" style="left:51px;top:76.0px" width="17" height="17" viewBox="0 0 16.5 16.5"><rect x="0.0" y="0.0" width="5.5" height="5.5" fill="#1e3a5f"/><rect x="5.5" y="0.0" width="5.5" height="5.5" fill="#dfe6ee"/><rect x="11.0" y="0.0" width="5.5" height="5.5" fill="#1e3a5f"/><rect x="0.0" y="5.5" width="5.5" height="5.5" fill="#dfe6ee"/><rect x="5.5" y="5.5" width="5.5" height="5.5" fill="#3d6a9d"/><rect x="11.0" y="5.5" width="5.5" height="5.5" fill="#dfe6ee"/><rect x="0.0" y="11.0" width="5.5" height="5.5" fill="#1e3a5f"/><rect x="5.5" y="11.0" width="5.5" height="5.5" fill="#9fb6cf"/><rect x="11.0" y="11.0" width="5.5" height="5.5" fill="#c5d3e2"/></svg>
<div class="tx " style="left:75px;top:77.7px;font-size:14.4px;color:#8a8a8a;font-weight:bold;font-style:italic;letter-spacing:0.099px;">WMS LGRB-BW GK50: Geologische Karte 1 : 50 000</div>
<svg class="abs" style="left:5px;top:104.5px" width="12" height="8" viewBox="0 0 12 8"><path d="M1 1.2l5 5 5-5" fill="none" stroke="#222" stroke-width="1.6"/></svg>
<div class="cb" style="left:27px;top:101.0px;border-color:#333"><svg width="13" height="13" viewBox="0 0 13 13"><path d="M2.2 6.6l3 3.2 5.8-7" fill="none" stroke="#222" stroke-width="1.3"/></svg></div>
<svg class="abs" style="left:50px;top:98.5px" width="17" height="18" viewBox="0 0 17 18"><path d="M1.5 8.5h3v7h7v2h-10z" fill="#e9e9e9" stroke="#a9a9a9"/><path d="M4.5 4.5h3v-3h4v3h3v10h-10z" fill="#efefef" stroke="#8e8e8e"/><path d="M8 6v6.5h3.5V6" fill="none" stroke="#8e8e8e"/></svg>
<div class="tx " style="left:75px;top:101.7px;font-size:14.4px;color:#000;letter-spacing:0.077px;">Pflanzengesellschaften</div>
<svg class="abs" style="left:33px;top:126.5px" width="8" height="12" viewBox="0 0 8 12"><path d="M1.5 1l5 5-5 5" fill="none" stroke="#9b9b9b" stroke-width="1.9"/></svg>
<div class="cb" style="left:52px;top:125.0px;border-color:#333"><svg width="13" height="13" viewBox="0 0 13 13"><path d="M2.2 6.6l3 3.2 5.8-7" fill="none" stroke="#222" stroke-width="1.3"/></svg></div>
<svg class="abs" style="left:75px;top:122.5px" width="17" height="18" viewBox="0 0 17 18"><path d="M1.5 8.5h3v7h7v2h-10z" fill="#e9e9e9" stroke="#a9a9a9"/><path d="M4.5 4.5h3v-3h4v3h3v10h-10z" fill="#efefef" stroke="#8e8e8e"/><path d="M8 6v6.5h3.5V6" fill="none" stroke="#8e8e8e"/></svg>
<div class="tx " style="left:100px;top:125.7px;font-size:14.4px;color:#000;letter-spacing:-0.125px;">Polytrichum_commune_Fazies</div>
<svg class="abs" style="left:33px;top:150.5px" width="8" height="12" viewBox="0 0 8 12"><path d="M1.5 1l5 5-5 5" fill="none" stroke="#9b9b9b" stroke-width="1.9"/></svg>
<div class="cb" style="left:52px;top:149.0px;border-color:#333"><svg width="13" height="13" viewBox="0 0 13 13"><path d="M2.2 6.6l3 3.2 5.8-7" fill="none" stroke="#222" stroke-width="1.3"/></svg></div>
<svg class="abs" style="left:75px;top:146.5px" width="17" height="18" viewBox="0 0 17 18"><path d="M1.5 8.5h3v7h7v2h-10z" fill="#e9e9e9" stroke="#a9a9a9"/><path d="M4.5 4.5h3v-3h4v3h3v10h-10z" fill="#efefef" stroke="#8e8e8e"/><path d="M8 6v6.5h3.5V6" fill="none" stroke="#8e8e8e"/></svg>
<div class="tx " style="left:100px;top:149.7px;font-size:14.4px;color:#000;letter-spacing:0.193px;">Sphagnetum_magellanici_Moor1</div>
<svg class="abs" style="left:33px;top:174.5px" width="8" height="12" viewBox="0 0 8 12"><path d="M1.5 1l5 5-5 5" fill="none" stroke="#9b9b9b" stroke-width="1.9"/></svg>
<div class="cb" style="left:52px;top:173.0px;border-color:#333"><svg width="13" height="13" viewBox="0 0 13 13"><path d="M2.2 6.6l3 3.2 5.8-7" fill="none" stroke="#222" stroke-width="1.3"/></svg></div>
<svg class="abs" style="left:75px;top:170.5px" width="17" height="18" viewBox="0 0 17 18"><path d="M1.5 8.5h3v7h7v2h-10z" fill="#e9e9e9" stroke="#a9a9a9"/><path d="M4.5 4.5h3v-3h4v3h3v10h-10z" fill="#efefef" stroke="#8e8e8e"/><path d="M8 6v6.5h3.5V6" fill="none" stroke="#8e8e8e"/></svg>
<div class="tx " style="left:100px;top:173.7px;font-size:14.4px;color:#000;letter-spacing:0.239px;">Eriophorum_vaginatum_Molinia_Moor2</div>
<svg class="abs" style="left:33px;top:198.5px" width="8" height="12" viewBox="0 0 8 12"><path d="M1.5 1l5 5-5 5" fill="none" stroke="#9b9b9b" stroke-width="1.9"/></svg>
<div class="cb" style="left:52px;top:197.0px;border-color:#333"><svg width="13" height="13" viewBox="0 0 13 13"><path d="M2.2 6.6l3 3.2 5.8-7" fill="none" stroke="#222" stroke-width="1.3"/></svg></div>
<svg class="abs" style="left:75px;top:194.5px" width="17" height="18" viewBox="0 0 17 18"><path d="M1.5 8.5h3v7h7v2h-10z" fill="#e9e9e9" stroke="#a9a9a9"/><path d="M4.5 4.5h3v-3h4v3h3v10h-10z" fill="#efefef" stroke="#8e8e8e"/><path d="M8 6v6.5h3.5V6" fill="none" stroke="#8e8e8e"/></svg>
<div class="tx " style="left:100px;top:197.7px;font-size:14.4px;color:#000;letter-spacing:0.22px;">Eriophorum_vaginatum_Moor3</div>
<svg class="abs" style="left:33px;top:222.5px" width="8" height="12" viewBox="0 0 8 12"><path d="M1.5 1l5 5-5 5" fill="none" stroke="#9b9b9b" stroke-width="1.9"/></svg>
<div class="cb" style="left:52px;top:221.0px;border-color:#333"><svg width="13" height="13" viewBox="0 0 13 13"><path d="M2.2 6.6l3 3.2 5.8-7" fill="none" stroke="#222" stroke-width="1.3"/></svg></div>
<svg class="abs" style="left:75px;top:218.5px" width="17" height="18" viewBox="0 0 17 18"><path d="M1.5 8.5h3v7h7v2h-10z" fill="#e9e9e9" stroke="#a9a9a9"/><path d="M4.5 4.5h3v-3h4v3h3v10h-10z" fill="#efefef" stroke="#8e8e8e"/><path d="M8 6v6.5h3.5V6" fill="none" stroke="#8e8e8e"/></svg>
<div class="tx " style="left:100px;top:221.7px;font-size:14.4px;color:#000;letter-spacing:0.22px;">Eriophorum_vaginatum_Moor4</div>
<svg class="abs" style="left:33px;top:246.5px" width="8" height="12" viewBox="0 0 8 12"><path d="M1.5 1l5 5-5 5" fill="none" stroke="#9b9b9b" stroke-width="1.9"/></svg>
<div class="cb" style="left:52px;top:245.0px;border-color:#333"><svg width="13" height="13" viewBox="0 0 13 13"><path d="M2.2 6.6l3 3.2 5.8-7" fill="none" stroke="#222" stroke-width="1.3"/></svg></div>
<svg class="abs" style="left:75px;top:242.5px" width="17" height="18" viewBox="0 0 17 18"><path d="M1.5 8.5h3v7h7v2h-10z" fill="#e9e9e9" stroke="#a9a9a9"/><path d="M4.5 4.5h3v-3h4v3h3v10h-10z" fill="#efefef" stroke="#8e8e8e"/><path d="M8 6v6.5h3.5V6" fill="none" stroke="#8e8e8e"/></svg>
<div class="tx " style="left:100px;top:245.7px;font-size:14.4px;color:#000;letter-spacing:0.238px;">Vaccinio_Abietetum</div>
<svg class="abs" style="left:33px;top:270.5px" width="8" height="12" viewBox="0 0 8 12"><path d="M1.5 1l5 5-5 5" fill="none" stroke="#9b9b9b" stroke-width="1.9"/></svg>
<div class="cb" style="left:52px;top:269.0px;border-color:#333"><svg width="13" height="13" viewBox="0 0 13 13"><path d="M2.2 6.6l3 3.2 5.8-7" fill="none" stroke="#222" stroke-width="1.3"/></svg></div>
<svg class="abs" style="left:75px;top:266.5px" width="17" height="18" viewBox="0 0 17 18"><path d="M1.5 8.5h3v7h7v2h-10z" fill="#e9e9e9" stroke="#a9a9a9"/><path d="M4.5 4.5h3v-3h4v3h3v10h-10z" fill="#efefef" stroke="#8e8e8e"/><path d="M8 6v6.5h3.5V6" fill="none" stroke="#8e8e8e"/></svg>
<div class="tx " style="left:100px;top:269.7px;font-size:14.4px;color:#000;letter-spacing:-0.166px;">Vaccinio_uliginosi_P_sylvestris_P_mugo</div>
<svg class="abs" style="left:33px;top:294.5px" width="8" height="12" viewBox="0 0 8 12"><path d="M1.5 1l5 5-5 5" fill="none" stroke="#9b9b9b" stroke-width="1.9"/></svg>
<div class="cb" style="left:52px;top:293.0px;border-color:#333"><svg width="13" height="13" viewBox="0 0 13 13"><path d="M2.2 6.6l3 3.2 5.8-7" fill="none" stroke="#222" stroke-width="1.3"/></svg></div>
<svg class="abs" style="left:75px;top:290.5px" width="17" height="18" viewBox="0 0 17 18"><path d="M1.5 8.5h3v7h7v2h-10z" fill="#e9e9e9" stroke="#a9a9a9"/><path d="M4.5 4.5h3v-3h4v3h3v10h-10z" fill="#efefef" stroke="#8e8e8e"/><path d="M8 6v6.5h3.5V6" fill="none" stroke="#8e8e8e"/></svg>
<div class="tx " style="left:100px;top:293.7px;font-size:14.4px;color:#000;letter-spacing:-0.053px;">Vaccinio_uliginosi_Pinetum_sylvestris_Bachniederung</div>
<svg class="abs" style="left:33px;top:318.5px" width="8" height="12" viewBox="0 0 8 12"><path d="M1.5 1l5 5-5 5" fill="none" stroke="#9b9b9b" stroke-width="1.9"/></svg>
<div class="cb" style="left:52px;top:317.0px;border-color:#333"><svg width="13" height="13" viewBox="0 0 13 13"><path d="M2.2 6.6l3 3.2 5.8-7" fill="none" stroke="#222" stroke-width="1.3"/></svg></div>
<svg class="abs" style="left:75px;top:314.5px" width="17" height="18" viewBox="0 0 17 18"><path d="M1.5 8.5h3v7h7v2h-10z" fill="#e9e9e9" stroke="#a9a9a9"/><path d="M4.5 4.5h3v-3h4v3h3v10h-10z" fill="#efefef" stroke="#8e8e8e"/><path d="M8 6v6.5h3.5V6" fill="none" stroke="#8e8e8e"/></svg>
<div class="tx " style="left:100px;top:317.7px;font-size:14.4px;color:#000;letter-spacing:0.036px;">Vaccinio_uliginosi_Pinetum_sylvestris_Birkendominanz</div>
<svg class="abs" style="left:33px;top:342.5px" width="8" height="12" viewBox="0 0 8 12"><path d="M1.5 1l5 5-5 5" fill="none" stroke="#9b9b9b" stroke-width="1.9"/></svg>
<div class="cb" style="left:52px;top:341.0px;border-color:#333"><svg width="13" height="13" viewBox="0 0 13 13"><path d="M2.2 6.6l3 3.2 5.8-7" fill="none" stroke="#222" stroke-width="1.3"/></svg></div>
<svg class="abs" style="left:75px;top:338.5px" width="17" height="18" viewBox="0 0 17 18"><path d="M1.5 8.5h3v7h7v2h-10z" fill="#e9e9e9" stroke="#a9a9a9"/><path d="M4.5 4.5h3v-3h4v3h3v10h-10z" fill="#efefef" stroke="#8e8e8e"/><path d="M8 6v6.5h3.5V6" fill="none" stroke="#8e8e8e"/></svg>
<div class="tx " style="left:100px;top:341.7px;font-size:14.4px;color:#000;letter-spacing:-0.024px;">Vaccinio_uliginosi_Pinetum_sylvestris_Dickung</div>
<svg class="abs" style="left:33px;top:366.5px" width="8" height="12" viewBox="0 0 8 12"><path d="M1.5 1l5 5-5 5" fill="none" stroke="#9b9b9b" stroke-width="1.9"/></svg>
<div class="cb" style="left:52px;top:365.0px;border-color:#333"><svg width="13" height="13" viewBox="0 0 13 13"><path d="M2.2 6.6l3 3.2 5.8-7" fill="none" stroke="#222" stroke-width="1.3"/></svg></div>
<svg class="abs" style="left:75px;top:362.5px" width="17" height="18" viewBox="0 0 17 18"><path d="M1.5 8.5h3v7h7v2h-10z" fill="#e9e9e9" stroke="#a9a9a9"/><path d="M4.5 4.5h3v-3h4v3h3v10h-10z" fill="#efefef" stroke="#8e8e8e"/><path d="M8 6v6.5h3.5V6" fill="none" stroke="#8e8e8e"/></svg>
<div class="tx " style="left:100px;top:365.7px;font-size:14.4px;color:#000;letter-spacing:0.02px;">Vaccinio_uliginosi_Pinetum_sylvestris_Heidestadium</div>
<svg class="abs" style="left:30px;top:392.5px" width="12" height="8" viewBox="0 0 12 8"><path d="M1 1.2l5 5 5-5" fill="none" stroke="#222" stroke-width="1.6"/></svg>
<div class="cb" style="left:52px;top:389.0px;border-color:#333"><svg width="13" height="13" viewBox="0 0 13 13"><path d="M2.2 6.6l3 3.2 5.8-7" fill="none" stroke="#222" stroke-width="1.3"/></svg></div>
<svg class="abs" style="left:75px;top:386.5px" width="17" height="18" viewBox="0 0 17 18"><path d="M1.5 8.5h3v7h7v2h-10z" fill="#e9e9e9" stroke="#a9a9a9"/><path d="M4.5 4.5h3v-3h4v3h3v10h-10z" fill="#efefef" stroke="#8e8e8e"/><path d="M8 6v6.5h3.5V6" fill="none" stroke="#8e8e8e"/></svg>
<div class="tx " style="left:100px;top:389.7px;font-size:14.4px;color:#000;letter-spacing:-0.006px;">Vaccinio_uliginosi_Pinetum_sylvestris_Torfstich</div>
<div class="abs" style="left:74px;top:409.0px;width:360px;height:23px;background:#d9d9d9"></div>
<div class="cb" style="left:77px;top:413.0px;border-color:#333"><svg width="13" height="13" viewBox="0 0 13 13"><path d="M2.2 6.6l3 3.2 5.8-7" fill="none" stroke="#222" stroke-width="1.3"/></svg></div>
<div class="abs" style="left:99px;top:411.0px;width:19px;height:19px;background:#1f78c8;border:1px solid #1a5fa8"></div>
<div class="tx " style="left:124px;top:413.7px;font-size:14.4px;color:#000;font-weight:bold;text-decoration:underline;letter-spacing:-0.234px;">vps_flaeche_alt</div>
<div class="cb" style="left:77px;top:437.0px;border-color:#333"></div>
<div class="abs" style="left:99px;top:443.0px;width:19px;height:3px;background:#3c8cc8"></div>
<div class="tx " style="left:124px;top:437.7px;font-size:14.4px;color:#8a8a8a;font-weight:bold;font-style:italic;letter-spacing:-0.3px;">vps_umriss</div>
<svg class="abs" style="left:8px;top:462.5px" width="8" height="12" viewBox="0 0 8 12"><path d="M1.5 1l5 5-5 5" fill="none" stroke="#9b9b9b" stroke-width="1.9"/></svg>
<div class="cb" style="left:27px;top:461.0px;border-color:#333"><svg width="13" height="13" viewBox="0 0 13 13"><path d="M2.2 6.6l3 3.2 5.8-7" fill="none" stroke="#222" stroke-width="1.3"/></svg></div>
<svg class="abs" style="left:50px;top:458.5px" width="17" height="18" viewBox="0 0 17 18"><path d="M1.5 8.5h3v7h7v2h-10z" fill="#e9e9e9" stroke="#a9a9a9"/><path d="M4.5 4.5h3v-3h4v3h3v10h-10z" fill="#efefef" stroke="#8e8e8e"/><path d="M8 6v6.5h3.5V6" fill="none" stroke="#8e8e8e"/></svg>
<div class="tx " style="left:75px;top:461.7px;font-size:14.4px;color:#000;letter-spacing:0.57px;">Biotope</div>
<svg class="abs" style="left:5px;top:488.5px" width="12" height="8" viewBox="0 0 12 8"><path d="M1 1.2l5 5 5-5" fill="none" stroke="#222" stroke-width="1.6"/></svg>
<div class="cb" style="left:27px;top:485.0px;border-color:#333"><svg width="13" height="13" viewBox="0 0 13 13"><path d="M2.2 6.6l3 3.2 5.8-7" fill="none" stroke="#222" stroke-width="1.3"/></svg></div>
<svg class="abs" style="left:51px;top:484.0px" width="17" height="17" viewBox="0 0 16.5 16.5"><rect x="0.0" y="0.0" width="5.5" height="5.5" fill="#1e3a5f"/><rect x="5.5" y="0.0" width="5.5" height="5.5" fill="#dfe6ee"/><rect x="11.0" y="0.0" width="5.5" height="5.5" fill="#1e3a5f"/><rect x="0.0" y="5.5" width="5.5" height="5.5" fill="#dfe6ee"/><rect x="5.5" y="5.5" width="5.5" height="5.5" fill="#3d6a9d"/><rect x="11.0" y="5.5" width="5.5" height="5.5" fill="#dfe6ee"/><rect x="0.0" y="11.0" width="5.5" height="5.5" fill="#1e3a5f"/><rect x="5.5" y="11.0" width="5.5" height="5.5" fill="#9fb6cf"/><rect x="11.0" y="11.0" width="5.5" height="5.5" fill="#c5d3e2"/></svg>
<div class="tx " style="left:75px;top:485.7px;font-size:14.4px;color:#000;font-weight:bold;letter-spacing:0.163px;">OpenStreetMap Standard</div>
<div class="abs" style="left:429px;top:0;width:6px;height:716px;background:#fff"></div>
<div class="abs" style="left:429px;top:0;width:5px;height:520px;background:repeating-linear-gradient(#eeeef4 0 20px,#fff 20px 24px)"></div>
<div class="abs" style="left:0;top:716px;width:433px;height:20px;background:#f0f0f0"></div>
<div class="abs" style="left:20px;top:716px;width:336px;height:20px;background:#cdcdcd"></div>
<svg class="abs" style="left:4px;top:720px" width="10" height="12" viewBox="0 0 10 12"><path d="M7 1.5L2.5 6 7 10.5" fill="none" stroke="#333" stroke-width="1.8"/></svg>
<svg class="abs" style="left:417px;top:720px" width="10" height="12" viewBox="0 0 10 12"><path d="M3 1.5L7.5 6 3 10.5" fill="none" stroke="#333" stroke-width="1.8"/></svg>
</div>
<svg class="abs" style="left:493px;top:198px" width="1230" height="797" viewBox="493 198 1230 797">
<defs>
<pattern id="trees" width="104" height="86" patternUnits="userSpaceOnUse" patternTransform="rotate(6)">
<g fill="none" stroke="#9dc290" stroke-width="1">
<path id="tr" d="M2.500 10.500V7M2.500 7c-2.600-1.200-2.600-6 0-6s2.600 4.800 0 6M8 10.500V7M8 7c-2.600-1.200-2.600-6 0-6s2.600 4.800 0 6"/>
<use href="#tr" transform="translate(34 5) rotate(-12)"/><use href="#tr" transform="translate(72 20) rotate(10)"/><use href="#tr" transform="translate(14 38) rotate(18)"/><use href="#tr" transform="translate(52 46) rotate(-8)"/><use href="#tr" transform="translate(88 60) rotate(-20)"/><use href="#tr" transform="translate(28 68) rotate(6)"/><use href="#tr" transform="translate(66 74) rotate(14)"/>
</g></pattern>
<linearGradient id="shR" x1="0" x2="1"><stop offset="0" stop-color="#000" stop-opacity=".35"/><stop offset="1" stop-color="#000" stop-opacity="0"/></linearGradient>
<linearGradient id="shL" x1="1" x2="0"><stop offset="0" stop-color="#000" stop-opacity=".3"/><stop offset="1" stop-color="#000" stop-opacity="0"/></linearGradient>
</defs>
<rect x="493" y="198" width="1230" height="797" fill="#add19e"/>
<rect x="493" y="198" width="1230" height="797" fill="url(#trees)"/>
<polygon points="574,197 1422,197 1300,250 1300,300 700,290" fill="#c8f008" stroke="#1d2b10" stroke-width="1"/>
<polygon points="492,337 620,448 620,660 555,679 514.4,710.8 595.7,967.4 492,986" fill="#c8f008" stroke="#1d2b10" stroke-width="1"/>
<polygon points="492,487 519.6,512 512,590 492,622" fill="#add19e" stroke="#1d2b10" stroke-width="1"/>
<path d="M492,682 L556,612" stroke="#138013" stroke-width="3.600" fill="none"/>
<polygon points="514.4,710.8 560,676 600,700 600,860 562,860" fill="#b4c0a4" stroke="#2a2a1a" stroke-width="1"/>
<polygon points="518,712 560,680 600,700 600,856 564.500,856" fill="#fde800" stroke="#3a3a1a" stroke-width="1"/>
<polygon points="1510,197 1611,197 1670,392 1655,666 1723,733 1723,882 1597,906 1397,967.6 1346.6,936.8 1276,906 1166.5,910 1151.5,882 1100,700 1414,693.500 1509,620 1604.500,424" fill="#ff8200" stroke="#3a1e00" stroke-width="1"/>
<polygon points="1504,197 1508,197 1607.500,424 1511.500,622 1416,696 1413,692.500 1509,619 1604.500,424" fill="#c5d2bf" stroke="#2a2a2a" stroke-width="1"/>
<polygon points="1440,197 1504,197 1604.500,423.700 1509,620 1414,693.500 1300,700 1300,250" fill="#e40ae6" stroke="#30102a" stroke-width="1"/>
<polygon points="1422,197 1438,197 1330,244 1320,240" fill="#c5d2bf" stroke="#1d2b10" stroke-width="1"/>
<path d="M1484,197 L1370,241" stroke="#3d4a4c" stroke-width="3.200"/>
<path d="M1613,197 L1672,392 L1656,665" stroke="#c5d2bf" stroke-width="2" fill="none"/>
<path d="M1616.500,197 L1675,392 L1658.400,666 L1635,839 L1470,893 L1276,906 L1100,917 L1062,918 L1009,930 L920,957 L789,977 L609,995" stroke="#186a14" stroke-width="4.400" fill="none" stroke-linejoin="round"/>
<path d="M1723,633 L1400,753" stroke="#000" stroke-width="4" fill="none"/>
<path d="M1723,641 L1664,665" stroke="#e8e8d8" stroke-width="2" stroke-dasharray="3 2" fill="none"/>
<path d="M1146,198 C1142,204 1144,215 1144,236" stroke="#000" stroke-width="4" fill="none"/>
<path d="M628,981 L624,970 L749,965 L905,932 L967,923.500 L1142,881" stroke="#dfe4cd" stroke-width="2" stroke-dasharray="2.500 2" fill="none"/>
<polygon points="600.500,870 606.700,912 618,947.600 629.700,960 676.600,957 670.400,916 687,907 697,903.600 801,907 819,917 834,931 880,916 930,902.400 969.700,903.600 1016,880 1016,860 600,860" fill="#1f78b4" stroke="#12344e" stroke-width="1"/>
<polygon points="697,870 702,897 799,901 834,910 880,907 927,892.400 931,870" fill="#2f9e2c" stroke="#1a5a18" stroke-width="0.800"/>
<polygon points="675,916 687,908.600 702,905 801,907 814,916 821,933.500 801,945 749,955 687,957" fill="#add19e" stroke="#add19e" stroke-width="7" stroke-linejoin="round"/>
<polygon points="675,916 687,908.600 702,905 801,907 814,916 821,933.500 801,945 749,955 687,957" fill="none" stroke="#12344e" stroke-width="8.400" stroke-linejoin="round" opacity="0"/>
<polygon points="675.500,916.500 687.500,909.500 702,906 800.500,908 813,916.500 820,933.500 800.500,944 749,954 688,956" fill="#fff" stroke="#222" stroke-width="0.900"/>
<polygon points="618,875 640,889 668,877" fill="#f0f0f0" stroke="#888" stroke-width="0.800"/>
<path d="M588,872 L614.600,967 L749,959.700 L905,926 L1062,880" stroke="#000" stroke-width="4.200" fill="none" stroke-linejoin="miter"/>
<polygon points="738.6,911.0 735.7,912.1 737.0,915.0 734.1,913.7 733.0,916.6 731.9,913.7 729.0,915.0 730.3,912.1 727.4,911.0 730.3,909.9 729.0,907.0 731.9,908.3 733.0,905.4 734.1,908.3 737.0,907.0 735.7,909.9" fill="#d4171b"/>
<polygon points="752.6,916.0 749.7,917.1 751.0,920.0 748.1,918.7 747.0,921.6 745.9,918.7 743.0,920.0 744.3,917.1 741.4,916.0 744.3,914.9 743.0,912.0 745.9,913.3 747.0,910.4 748.1,913.3 751.0,912.0 749.7,914.9" fill="#d4171b"/>
<polygon points="760.6,910.0 757.7,911.1 759.0,914.0 756.1,912.7 755.0,915.6 753.9,912.7 751.0,914.0 752.3,911.1 749.4,910.0 752.3,908.9 751.0,906.0 753.9,907.3 755.0,904.4 756.1,907.3 759.0,906.0 757.7,908.9" fill="#d4171b"/>
<polygon points="776.6,911.0 773.7,912.1 775.0,915.0 772.1,913.7 771.0,916.6 769.9,913.7 767.0,915.0 768.3,912.1 765.4,911.0 768.3,909.9 767.0,907.0 769.9,908.3 771.0,905.4 772.1,908.3 775.0,907.0 773.7,909.9" fill="#d4171b"/>
<polygon points="776.6,919.0 773.7,920.1 775.0,923.0 772.1,921.7 771.0,924.6 769.9,921.7 767.0,923.0 768.3,920.1 765.4,919.0 768.3,917.9 767.0,915.0 769.9,916.3 771.0,913.4 772.1,916.3 775.0,915.0 773.7,917.9" fill="#d4171b"/>
<polygon points="791.6,911.0 788.7,912.1 790.0,915.0 787.1,913.7 786.0,916.6 784.9,913.7 782.0,915.0 783.3,912.1 780.4,911.0 783.3,909.9 782.0,907.0 784.9,908.3 786.0,905.4 787.1,908.3 790.0,907.0 788.7,909.9" fill="#d4171b"/>
<polygon points="803.6,917.0 800.7,918.1 802.0,921.0 799.1,919.7 798.0,922.6 796.9,919.7 794.0,921.0 795.3,918.1 792.4,917.0 795.3,915.9 794.0,913.0 796.9,914.3 798.0,911.4 799.1,914.3 802.0,913.0 800.7,915.9" fill="#d4171b"/>
<polygon points="749.6,925.0 746.7,926.1 748.0,929.0 745.1,927.7 744.0,930.6 742.9,927.7 740.0,929.0 741.3,926.1 738.4,925.0 741.3,923.9 740.0,921.0 742.9,922.3 744.0,919.4 745.1,922.3 748.0,921.0 746.7,923.9" fill="#d4171b"/>
<polygon points="762.6,922.0 759.7,923.1 761.0,926.0 758.1,924.7 757.0,927.6 755.9,924.7 753.0,926.0 754.3,923.1 751.4,922.0 754.3,920.9 753.0,918.0 755.9,919.3 757.0,916.4 758.1,919.3 761.0,918.0 759.7,920.9" fill="#d4171b"/>
<polygon points="789.6,927.0 786.7,928.1 788.0,931.0 785.1,929.7 784.0,932.6 782.9,929.7 780.0,931.0 781.3,928.1 778.4,927.0 781.3,925.9 780.0,923.0 782.9,924.3 784.0,921.4 785.1,924.3 788.0,923.0 786.7,925.9" fill="#d4171b"/>
<polygon points="771.6,930.0 768.7,931.1 770.0,934.0 767.1,932.7 766.0,935.6 764.9,932.7 762.0,934.0 763.3,931.1 760.4,930.0 763.3,928.9 762.0,926.0 764.9,927.3 766.0,924.4 767.1,927.3 770.0,926.0 768.7,928.9" fill="#d4171b"/>
<polygon points="805.6,886.0 802.7,887.1 804.0,890.0 801.1,888.7 800.0,891.6 798.9,888.7 796.0,890.0 797.3,887.1 794.4,886.0 797.3,884.9 796.0,882.0 798.9,883.3 800.0,880.4 801.1,883.3 804.0,882.0 802.7,884.9" fill="#d4171b"/>
<polygon points="817.6,887.0 814.7,888.1 816.0,891.0 813.1,889.7 812.0,892.6 810.9,889.7 808.0,891.0 809.3,888.1 806.4,887.0 809.3,885.9 808.0,883.0 810.9,884.3 812.0,881.4 813.1,884.3 816.0,883.0 814.7,885.9" fill="#d4171b"/>
<polygon points="810.6,880.0 807.7,881.1 809.0,884.0 806.1,882.7 805.0,885.6 803.9,882.7 801.0,884.0 802.3,881.1 799.4,880.0 802.3,878.9 801.0,876.0 803.9,877.3 805.0,874.4 806.1,877.3 809.0,876.0 807.7,878.9" fill="#d4171b"/>
<circle cx="703" cy="902" r="7.4" fill="#fff" stroke="#000" stroke-width="1.2"/><circle cx="703" cy="902" r="2.6" fill="#000"/>
<circle cx="653" cy="916" r="7.4" fill="#fff" stroke="#000" stroke-width="1.2"/><circle cx="653" cy="916" r="2.6" fill="#000"/>
<circle cx="680" cy="930.5" r="7.4" fill="#fff" stroke="#000" stroke-width="1.2"/><circle cx="680" cy="930.5" r="2.6" fill="#000"/>
<circle cx="702" cy="959.7" r="7.4" fill="#fff" stroke="#000" stroke-width="1.2"/><circle cx="702" cy="959.7" r="2.6" fill="#000"/>
<circle cx="647" cy="967.7" r="7.4" fill="#fff" stroke="#000" stroke-width="1.2"/><circle cx="647" cy="967.7" r="2.6" fill="#000"/>
<circle cx="801" cy="905" r="7.4" fill="#fff" stroke="#000" stroke-width="1.2"/><circle cx="801" cy="905" r="2.6" fill="#000"/>
<circle cx="812" cy="919" r="7.4" fill="#fff" stroke="#000" stroke-width="1.2"/><circle cx="812" cy="919" r="2.6" fill="#000"/>
<circle cx="775.7" cy="939.7" r="7.4" fill="#fff" stroke="#000" stroke-width="1.2"/><circle cx="775.7" cy="939.7" r="2.6" fill="#000"/>
<circle cx="763.5" cy="947" r="7.4" fill="#fff" stroke="#000" stroke-width="1.2"/><circle cx="763.5" cy="947" r="2.6" fill="#000"/>
<circle cx="787.7" cy="972.6" r="7.4" fill="#fff" stroke="#000" stroke-width="1.2"/><circle cx="787.7" cy="972.6" r="2.6" fill="#000"/>
<circle cx="861.7" cy="971" r="7.4" fill="#fff" stroke="#000" stroke-width="1.2"/><circle cx="861.7" cy="971" r="2.6" fill="#000"/>
<circle cx="905.5" cy="917.3" r="7.4" fill="#fff" stroke="#000" stroke-width="1.2"/><circle cx="905.5" cy="917.3" r="2.6" fill="#000"/>
<circle cx="984.6" cy="895.7" r="7.4" fill="#fff" stroke="#000" stroke-width="1.2"/><circle cx="984.6" cy="895.7" r="2.6" fill="#000"/>
<circle cx="1023" cy="886" r="7.4" fill="#fff" stroke="#000" stroke-width="1.2"/><circle cx="1023" cy="886" r="2.6" fill="#000"/>
<circle cx="1147.5" cy="223" r="7.4" fill="#fff" stroke="#000" stroke-width="1.2"/><circle cx="1147.5" cy="223" r="2.6" fill="#000"/>
<circle cx="1472.5" cy="564.3" r="7.4" fill="#fff" stroke="#000" stroke-width="1.2"/><circle cx="1472.5" cy="564.3" r="2.6" fill="#000"/>
<circle cx="1535.5" cy="641.7" r="7.4" fill="#fff" stroke="#000" stroke-width="1.2"/><circle cx="1535.5" cy="641.7" r="2.6" fill="#000"/>
<circle cx="1471" cy="655.6" r="7.4" fill="#fff" stroke="#000" stroke-width="1.2"/><circle cx="1471" cy="655.6" r="2.6" fill="#000"/>
<circle cx="1507" cy="685" r="7.4" fill="#fff" stroke="#000" stroke-width="1.2"/><circle cx="1507" cy="685" r="2.6" fill="#000"/>
<circle cx="1618.4" cy="681.7" r="7.4" fill="#fff" stroke="#000" stroke-width="1.2"/><circle cx="1618.4" cy="681.7" r="2.6" fill="#000"/>
<circle cx="1645" cy="679.6" r="7.4" fill="#fff" stroke="#000" stroke-width="1.2"/><circle cx="1645" cy="679.6" r="2.6" fill="#000"/>
<circle cx="1675" cy="676.7" r="7.4" fill="#fff" stroke="#000" stroke-width="1.2"/><circle cx="1675" cy="676.7" r="2.6" fill="#000"/>
<circle cx="1547.7" cy="702" r="7.4" fill="#fff" stroke="#000" stroke-width="1.2"/><circle cx="1547.7" cy="702" r="2.6" fill="#000"/>
<circle cx="1575.5" cy="702" r="7.4" fill="#fff" stroke="#000" stroke-width="1.2"/><circle cx="1575.5" cy="702" r="2.6" fill="#000"/>
<circle cx="1511" cy="714.5" r="7.4" fill="#fff" stroke="#000" stroke-width="1.2"/><circle cx="1511" cy="714.5" r="2.6" fill="#000"/>
<circle cx="1486" cy="719.6" r="7.4" fill="#fff" stroke="#000" stroke-width="1.2"/><circle cx="1486" cy="719.6" r="2.6" fill="#000"/>
<circle cx="1486.7" cy="742.7" r="7.4" fill="#fff" stroke="#000" stroke-width="1.2"/><circle cx="1486.7" cy="742.7" r="2.6" fill="#000"/>
<circle cx="1439" cy="755" r="7.4" fill="#fff" stroke="#000" stroke-width="1.2"/><circle cx="1439" cy="755" r="2.6" fill="#000"/>
<circle cx="1429" cy="779" r="7.4" fill="#fff" stroke="#000" stroke-width="1.2"/><circle cx="1429" cy="779" r="2.6" fill="#000"/>
<g font-family="'DejaVu Sans Condensed','Liberation Sans',sans-serif" font-size="17.500" fill="#111">
<text x="702.500" y="935.500">sma</text>
<text x="1068" y="911" font-size="17">nsg_1937</text>
<text x="1428" y="425" fill="#3c0a44" font-size="16.500">vpm</text>
<text x="1513" y="702" fill="#3c0c14" font-size="16.500">vab</text>
</g>
<text font-family="'Liberation Sans',sans-serif" font-size="10" fill="#55604f" transform="translate(782,966.500) rotate(-14)" letter-spacing="0.55">Rundweg "Bannwald</text>
<text font-family="'Liberation Sans',sans-serif" font-size="9" fill="#5a6a55" transform="translate(925,928) rotate(-14)" letter-spacing="0.5">nsg-Torfstich</text>
</svg>
<div class="abs" style="left:1722px;top:198px;width:1px;height:798px;background:#8a8f88"></div><div class="abs" style="left:492px;top:198px;width:1px;height:798px;background:#8a8f88"></div><div class="abs" style="left:492px;top:995px;width:1231px;height:1px;background:#7d8a78"></div><div class="abs" style="left:492px;top:197px;width:1231px;height:1px;background:#9a9a9a"></div>
<div id="dlg" class="abs">
<div id="dlgtitle" class="abs"></div>
<svg class="abs" style="left:9px;top:8px" width="19.5" height="19.5" viewBox="0 0 24 24"><circle cx="11" cy="11" r="8" fill="none" stroke="#6a9a3a" stroke-width="5"/><path d="M11 11 L22 22" stroke="#6a9a3a" stroke-width="5.2" stroke-linecap="butt"/><path d="M12.5 12.5 L17 17" stroke="#f0e64a" stroke-width="2.2"/><circle cx="11.5" cy="11.5" r="2.2" fill="#ee7913"/></svg>
<div class="tx " style="left:35px;top:12px;letter-spacing:0.297px;font-size:14.4px;color:#111;">Differenz</div>
<svg class="abs" style="left:831px;top:11px" width="14" height="14" viewBox="0 0 14 14"><path d="M1 1l12 12M13 1L1 13" stroke="#111" stroke-width="1.2"/></svg>
<div class="abs" style="left:13px;top:74px;width:559px;height:465px;border:1px solid #dadada;border-right-color:#fbfbfb;border-bottom-color:#fbfbfb;background:#f0f0f0"></div>
<div class="abs" style="left:13px;top:51px;width:91px;height:24px;background:#fbfbfb;border:1px solid #dadada;border-bottom:none"></div>
<div class="abs" style="left:104px;top:53px;width:76px;height:21px;background:#f0f0f0;border:1px solid #dadada;border-left:none;border-bottom:none"></div>
<div class="tx ui" style="left:28px;top:57px;letter-spacing:0.023px;font-size:12.6px;color:#000;">Parameter</div>
<div class="tx ui" style="left:118px;top:58px;letter-spacing:-0.06px;font-size:12.6px;color:#000;">Protokoll</div>
<div class="tx ui" style="left:19px;top:82px;letter-spacing:-0.152px;font-size:12.6px;color:#000;">Eingabelayer</div>
<div class="combo" style="left:19px;top:102px;width:482px;height:26px"></div>
<svg class="abs" style="left:24px;top:108px" width="20" height="14" viewBox="0 0 20 14"><path d="M2 3 C4 0.5 7 2.5 10 2.5 C13 2.5 16 0.5 18 2.5 C19.5 5 18.5 9 17.5 12 C14 13.5 12 9.5 9.5 9.5 C7 9.5 5 13.5 2.5 12.5 C0.5 9 0.8 5 2 3Z" fill="#e8e8e8" stroke="#9a9a9a" stroke-width="1.2"/></svg>
<div class="tx ui" style="left:47px;top:109.5px;letter-spacing:0.105px;font-size:12.6px;color:#000;">vps_flaeche_alt [EPSG:4326]</div>
<svg class="abs" style="left:483.5px;top:112px" width="12" height="8" viewBox="0 0 12 8"><path d="M1 1.5l5 5 5-5" fill="none" stroke="#444" stroke-width="1.2"/></svg>
<div class="btn ui" style="left:508px;top:103px;width:24px;height:20px;line-height:21px">...</div>
<div class="btn" style="left:540px;top:103px;width:25px;height:24px"><svg style="position:absolute;left:5px;top:4px" width="15" height="15" viewBox="0 0 15 15"><path d="M3.2 10.8A5.3 5.3 0 1 0 2.4 6" fill="none" stroke="#4a9e3a" stroke-width="2.6"/><path d="M3.2 10.8A5.3 5.3 0 1 0 2.4 6" fill="none" stroke="#9fe08a" stroke-width="1.1"/><path d="M0.3 8.6l5.4-.2-2.2 4.6z" fill="#4a9e3a"/><circle cx="7.6" cy="7.6" r="1.6" fill="#6abf55"/></svg></div>
<div class="abs" style="left:19.5px;top:137.5px;width:15px;height:14px;border:1px solid #cfcfcf;background:#fff"></div>
<div class="tx ui" style="left:41.5px;top:139px;letter-spacing:-0.056px;font-size:12.6px;color:#868686;">Nur gewählte Symbole</div>
<div class="tx ui" style="left:19px;top:164px;letter-spacing:-0.048px;font-size:12.6px;color:#000;">Layer überlagern</div>
<div class="combo" style="left:19px;top:184px;width:482px;height:26px"></div>
<svg class="abs" style="left:24px;top:190px" width="20" height="14" viewBox="0 0 20 14"><path d="M2 3 C4 0.5 7 2.5 10 2.5 C13 2.5 16 0.5 18 2.5 C19.5 5 18.5 9 17.5 12 C14 13.5 12 9.5 9.5 9.5 C7 9.5 5 13.5 2.5 12.5 C0.5 9 0.8 5 2 3Z" fill="#e8e8e8" stroke="#9a9a9a" stroke-width="1.2"/></svg>
<div class="tx ui" style="left:47px;top:191.5px;letter-spacing:0.059px;font-size:12.6px;color:#000;">vpn_flaeche [EPSG:4326]</div>
<svg class="abs" style="left:483.5px;top:194px" width="12" height="8" viewBox="0 0 12 8"><path d="M1 1.5l5 5 5-5" fill="none" stroke="#444" stroke-width="1.2"/></svg>
<div class="btn ui" style="left:508px;top:185px;width:24px;height:20px;line-height:21px">...</div>
<div class="btn" style="left:540px;top:185px;width:25px;height:24px"><svg style="position:absolute;left:5px;top:4px" width="15" height="15" viewBox="0 0 15 15"><path d="M3.2 10.8A5.3 5.3 0 1 0 2.4 6" fill="none" stroke="#4a9e3a" stroke-width="2.6"/><path d="M3.2 10.8A5.3 5.3 0 1 0 2.4 6" fill="none" stroke="#9fe08a" stroke-width="1.1"/><path d="M0.3 8.6l5.4-.2-2.2 4.6z" fill="#4a9e3a"/><circle cx="7.6" cy="7.6" r="1.6" fill="#6abf55"/></svg></div>
<div class="abs" style="left:19.5px;top:219.5px;width:15px;height:14px;border:1px solid #cfcfcf;background:#fff"></div>
<div class="tx ui" style="left:41.5px;top:221px;letter-spacing:-0.056px;font-size:12.6px;color:#868686;">Nur gewählte Symbole</div>
<div class="tx ui" style="left:19px;top:246px;letter-spacing:-0.016px;font-size:12.6px;color:#000;">Differenz</div>
<div class="abs" style="left:19px;top:266px;width:515px;height:22px;background:#fff;border:1px solid #7a7a7a"></div>
<div class="tx ui" style="left:22px;top:272px;letter-spacing:0.166px;font-size:12.6px;color:#8c8c8c;">[Temporärlayer erzeugen]</div>
<div class="btn ui" style="left:541px;top:267px;width:24px;height:20px;line-height:21px">...</div>
<div class="cb" style="left:19.5px;top:298px;width:15px;height:15px"><svg width="13" height="13" viewBox="0 0 13 13"><path d="M2.2 6.6l3 3.2 5.8-7" fill="none" stroke="#222" stroke-width="1.3"/></svg></div>
<div class="tx ui" style="left:41.5px;top:300.5px;letter-spacing:0.003px;font-size:12.6px;color:#000;">Öffne Ausgabedatei nach erfolgreicher Ausführung</div>
<svg class="abs" style="left:577px;top:51px" width="6" height="8" viewBox="0 0 6 8"><path d="M5 0.5v7L0.8 4z" fill="#111"/></svg>
<div class="abs" style="left:590px;top:50px;width:256px;height:490px;background:#fff;border:1px solid #828790"></div>
<div class="tx ui" style="left:595px;top:58px;letter-spacing:0.031px;font-size:20.2px;color:#454545;font-weight:bold;">Differenz</div>
<div class="tx ui" style="left:595px;top:94px;letter-spacing:0.034px;font-size:12.5px;color:#5a5a5a;">Dieser Algorithmus extrahiert Objekte aus</div>
<div class="tx ui" style="left:595px;top:110px;letter-spacing:0.047px;font-size:12.5px;color:#5a5a5a;">dem Eingabelayer, die außerhalb des</div>
<div class="tx ui" style="left:595px;top:126px;letter-spacing:0.019px;font-size:12.5px;color:#5a5a5a;">Überlagerungslayers sind oder ihn</div>
<div class="tx ui" style="left:595px;top:142px;letter-spacing:0.033px;font-size:12.5px;color:#5a5a5a;">teilweise überlagern. Eingabelayerobjekte</div>
<div class="tx ui" style="left:595px;top:158px;letter-spacing:0.055px;font-size:12.5px;color:#5a5a5a;">die sich teilweise mit Objekten des</div>
<div class="tx ui" style="left:595px;top:174px;letter-spacing:-0.002px;font-size:12.5px;color:#5a5a5a;">Überlagerungslayers überschneiden</div>
<div class="tx ui" style="left:595px;top:190px;letter-spacing:0.098px;font-size:12.5px;color:#5a5a5a;">werden entlang der Grenze der</div>
<div class="tx ui" style="left:595px;top:206px;letter-spacing:0.011px;font-size:12.5px;color:#5a5a5a;">Überlagerungslayerobjekten aufgetrennt</div>
<div class="tx ui" style="left:595px;top:222px;letter-spacing:0.045px;font-size:12.5px;color:#5a5a5a;">und nur die Bereiche außerhalb der</div>
<div class="tx ui" style="left:595px;top:238px;letter-spacing:-0.003px;font-size:12.5px;color:#5a5a5a;">Überlagerungslayerobjekte bleiben</div>
<div class="tx ui" style="left:595px;top:254px;letter-spacing:0.0px;font-size:12.5px;color:#5a5a5a;">erhalten.</div>
<div class="tx ui" style="left:595px;top:282px;letter-spacing:0.047px;font-size:12.5px;color:#5a5a5a;">Die Attribute der Objekt werde nicht</div>
<div class="tx ui" style="left:595px;top:298px;letter-spacing:0.051px;font-size:12.5px;color:#5a5a5a;">geändert obwohl die Eigenschaften wie</div>
<div class="tx ui" style="left:595px;top:314px;letter-spacing:0.073px;font-size:12.5px;color:#5a5a5a;">Fläche oder Länge der Objekte durch die</div>
<div class="tx ui" style="left:595px;top:330px;letter-spacing:0.056px;font-size:12.5px;color:#5a5a5a;">Differenzoperation geändert werden.</div>
<div class="tx ui" style="left:595px;top:346px;letter-spacing:0.033px;font-size:12.5px;color:#5a5a5a;">Wenn solche Eigenschaften als Attribute</div>
<div class="tx ui" style="left:595px;top:362px;letter-spacing:0.082px;font-size:12.5px;color:#5a5a5a;">geführt werden, müssen sie manuell</div>
<div class="tx ui" style="left:595px;top:378px;letter-spacing:0.041px;font-size:12.5px;color:#5a5a5a;">aktualisiert werden.</div>
<div class="abs" style="left:13px;top:572px;width:694px;height:24px;background:#e6e6e6;border:1px solid #bcbcbc"></div>
<div class="tx ui" style="left:716px;top:579.5px;letter-spacing:0.308px;font-size:12.6px;color:#000;">0%</div>
<div class="btn ui" style="left:754px;top:571px;width:91px;height:26px;line-height:26px;color:#838383;background:#cccccc;border-color:#bfbfbf">Abbruch</div>
<div class="btn ui" style="left:14px;top:607px;width:158px;height:25px;line-height:25px;color:#000;">Als Batchprozess starten...</div>
<div class="btn ui" style="left:554px;top:606px;width:91px;height:26px;line-height:26px;color:#000;border:2px solid #0078d7;line-height:24px">Starte</div>
<div class="btn ui" style="left:654px;top:606.5px;width:91px;height:25px;line-height:25px;color:#000;">Schließen</div>
<div class="btn ui" style="left:754px;top:606.5px;width:91px;height:25px;line-height:25px;color:#000;">Hilfe</div>
<div class="redbox" style="left:7.5px;top:74.5px;width:218.5px;height:63px"></div>
<div class="redbox" style="left:7.5px;top:156.5px;width:218.5px;height:64px"></div>
</div>
<div id="status" class="abs"></div>
<div class="abs" style="left:0;top:1027px;width:1726px;height:2px;background:#1a1a1a"></div>
<div class="fld" style="left:5px;top:1001px;width:278.5px;height:22px"></div>
<svg class="abs" style="left:13px;top:1005px" width="14" height="14" viewBox="0 0 14 14"><circle cx="5.5" cy="5.5" r="4" fill="none" stroke="#8a8a8a" stroke-width="1.3"/><path d="M8.5 8.5l4 4" stroke="#8a8a8a" stroke-width="1.6"/></svg>
<div class="tx ui" style="left:33.3px;top:1007px;letter-spacing:0.104px;font-size:12.6px;color:#6d6d6d;">Zu suchender Typ (Strg+K)</div>
<div class="tx ui" style="left:707.3px;top:1007px;letter-spacing:-0.098px;font-size:12.6px;color:#000;">Koordinate</div>
<div class="fld" style="left:771px;top:1001px;width:132px"></div>
<div class="tx ui" style="left:778.4px;top:1007px;letter-spacing:-0.184px;font-size:12.6px;color:#000;">473578.5,5397434.1</div>
<svg class="abs" style="left:905px;top:1000px" width="24" height="25" viewBox="0 0 24 25"><path d="M3 5l11 16" stroke="#111" stroke-width="1.500"/><ellipse cx="9.500" cy="12" rx="5.200" ry="8.500" transform="rotate(-30 9.500 12)" fill="#d8d8d8" stroke="#111" stroke-width="1.800"/><path d="M3.500 8.500c2-3 4-4.500 7-5.500l3 5c-3 1-5 2.500-7 5z" fill="#222"/><path d="M7 6.500l2 4" stroke="#eee" stroke-width="1.200"/><ellipse cx="12.500" cy="18.500" rx="3.200" ry="2.600" fill="#fff" stroke="#111" stroke-width="1.500"/><circle cx="12.500" cy="18.500" r="1" fill="#111"/><path d="M16 4l2.500-2M18 7.500l3-1M14 2l.5-1.500" stroke="#333" stroke-width="1"/></svg>
<div class="tx ui" style="left:940.5px;top:1007px;letter-spacing:-0.192px;font-size:12.6px;color:#000;">Maßstab</div>
<div class="fld" style="left:991px;top:1001px;width:91px"></div>
<div class="tx ui" style="left:996.6px;top:1007px;letter-spacing:-0.143px;font-size:12.6px;color:#000;">1:2025</div>
<svg class="abs" style="left:1064px;top:1009px" width="12" height="8" viewBox="0 0 12 8"><path d="M1 1.2l5 5 5-5" fill="none" stroke="#333" stroke-width="1.2"/></svg>
<svg class="abs" style="left:1092px;top:1002px" width="18" height="21" viewBox="0 0 18 21"><path d="M4.500 9.500V7a4.500 4.500 0 0 1 9 0v2.500" fill="none" stroke="#a2a2a2" stroke-width="2.200"/><rect x="1.500" y="9" width="15" height="11" rx="1.200" fill="#8a8a8a"/></svg>
<div class="tx ui" style="left:1118.7px;top:1007px;letter-spacing:0.057px;font-size:12.6px;color:#000;">Vergrößerung</div>
<div class="fld" style="left:1200.5px;top:1001px;width:86px"></div>
<div class="tx ui" style="left:1203.9px;top:1007px;letter-spacing:-0.348px;font-size:12.6px;color:#000;">100%</div>
<svg class="abs" style="left:1272px;top:1002.5px" width="12" height="19" viewBox="0 0 12 19"><rect x="0.5" y="0.5" width="11" height="18" fill="#f4f4f4" stroke="#b5b5b5"/><path d="M0.5 9.5h11" stroke="#b5b5b5"/><path d="M6 2.5l3.5 4.5h-7zM6 16.5l3.5-4.5h-7z" fill="#111"/></svg>
<div class="tx ui" style="left:1295.9px;top:1007px;letter-spacing:-0.147px;font-size:12.6px;color:#000;">Drehung</div>
<div class="fld" style="left:1353px;top:1001px;width:85px"></div>
<div class="tx ui" style="left:1356px;top:1007px;font-size:12.6px;color:#000;">0,0 °</div>
<svg class="abs" style="left:1423.5px;top:1002.5px" width="12" height="19" viewBox="0 0 12 19"><rect x="0.5" y="0.5" width="11" height="18" fill="#f4f4f4" stroke="#b5b5b5"/><path d="M0.5 9.5h11" stroke="#b5b5b5"/><path d="M6 2.5l3.5 4.5h-7zM6 16.5l3.5-4.5h-7z" fill="#111"/></svg>
<div class="cb" style="left:1444px;top:1004.5px;width:16px;height:16px"><svg width="13" height="13" viewBox="0 0 13 13"><path d="M2.2 6.6l3 3.2 5.8-7" fill="none" stroke="#222" stroke-width="1.3"/></svg></div>
<div class="tx ui" style="left:1466px;top:1007px;letter-spacing:-0.28px;font-size:12.6px;color:#000;">Zeichnen</div>
<svg class="abs" style="left:1533px;top:1002px" width="22" height="20" viewBox="0 0 22 20"><ellipse cx="11" cy="11" rx="8.5" ry="7.5" fill="#ededed" stroke="#777" stroke-width="1.1"/><path d="M2.5 11h17M11 3.5v15M5 6.5c4 2 8 2 12 0M5 15.5c4-2 8-2 12 0M11 3.5c-5 4-5 11 0 15M11 3.5c5 4 5 11 0 15" fill="none" stroke="#777" stroke-width="0.9"/><path d="M3 4l8-3 8 3" fill="none" stroke="#666" stroke-width="1.2"/></svg>
<div class="tx ui" style="left:1557.7px;top:1007px;letter-spacing:0.017px;font-size:12.6px;color:#000;">EPSG:25832</div>
<svg class="abs" style="left:1645px;top:1002px" width="22" height="21" viewBox="0 0 22 21"><path d="M11 1.5c5.5 0 9.5 3 9.5 7s-4 7-8 7l4 4.5-7.5-4.7C4.5 14.5 1 12 1 8.500c0-4 4.500-7 10-7z" fill="#5e5e5e"/><circle cx="6.500" cy="8.800" r="1.300" fill="#fff"/><circle cx="11" cy="8.800" r="1.300" fill="#fff"/><circle cx="15.500" cy="8.800" r="1.300" fill="#fff"/></svg>
<svg class="abs" style="left:1678px;top:1001px" width="24" height="22" viewBox="0 0 24 22"><path d="M2 6.500h5l2.500-4 2.500 4h4.500v5h2.500v7h-17l4.500-6z" fill="#b9b9b9" stroke="#6e6e6e" stroke-width="1.100"/><path d="M17 4c3-3 6-1.500 5.500 2-0.500 4.500-3 8-6 9" fill="none" stroke="#6e6e6e" stroke-width="1.100"/></svg>
<svg class="abs" style="left:1708px;top:1012px" width="13" height="13" viewBox="0 0 13 13"><g fill="#bdbdbd"><rect x="8" y="0" width="3" height="3"/><rect x="4" y="4" width="3" height="3"/><rect x="8" y="4" width="3" height="3"/><rect x="0" y="8" width="3" height="3"/><rect x="4" y="8" width="3" height="3"/><rect x="8" y="8" width="3" height="3"/></g></svg>
<svg class="abs" style="left:0;top:0;pointer-events:none" width="1726" height="1029" viewBox="0 0 1726 1029">
<ellipse cx="513.600" cy="49.300" rx="47.700" ry="22.700" fill="none" stroke="#e8141c" stroke-width="2.200"/>
<path d="M565,47 H608" stroke="#e8141c" stroke-width="2"/><path d="M621,47 L603,41.500 L606,47 L603,52.500Z" fill="#e8141c"/>
<path d="M885,49 H942" stroke="#e8141c" stroke-width="2"/><path d="M955,49 L937,43.500 L940,49 L937,54.500Z" fill="#e8141c"/>
<path d="M1053,46.5 C1055.5,46.0 1063.0,44.2 1068,43.5 C1073.0,42.8 1078.3,42.3 1083,42.5 C1087.7,42.7 1092.5,43.5 1096,44.5 C1099.5,45.5 1101.8,46.8 1104,48.5 C1106.2,50.2 1108.2,52.8 1109,55 C1109.8,57.2 1110.6,58.6 1108.8,62 C1107.0,65.4 1102.6,70.8 1098.3,75.3 C1094.0,79.8 1088.1,84.4 1083,88.7 C1077.9,93.0 1073.4,96.5 1067.7,101 C1062.0,105.5 1055.6,110.5 1048.6,115.4 C1041.6,120.4 1033.6,125.4 1025.6,130.7 C1017.6,136.0 1008.9,141.3 1000.8,147 C992.7,152.7 984.0,159.3 976.9,165 C969.8,170.7 963.6,176.0 958,181 C952.4,186.0 948.0,190.5 943.3,195 C938.6,199.5 933.5,204.2 930,208 C926.5,211.8 924.2,214.5 922,218 C919.8,221.5 917.7,225.7 916.5,229 C915.3,232.3 914.9,236.5 914.6,238" fill="none" stroke="#e8141c" stroke-width="2"/>
<path d="M914.300,249 L908.500,231 L914.800,235 L920.500,232Z" fill="#e8141c"/>
<path d="M806,514.500 H760" stroke="#e8141c" stroke-width="2"/><path d="M740,514 L759,509 L756,514.500 L759,519.500Z" fill="#e8141c"/>
<path d="M1150.500,772 V826" stroke="#e8141c" stroke-width="1.800"/><path d="M1150.500,842 L1145,822 L1150.500,825 L1156,822Z" fill="#e8141c"/>
</svg>
<div class="ybox" style="left:620px;top:30.500px;width:265px;height:40.500px;font-size:16.300px;line-height:34.500px;letter-spacing:0.15px">Geoverarbeitungswerkzeuge</div>
<div class="ybox" style="left:953.500px;top:30.500px;width:99.500px;height:42px;font-size:16.300px;line-height:36px;letter-spacing:0.2px">Differenz</div>
<div class="ybox" style="left:879.500px;top:927.500px;width:128px;height:44px;font-size:20.500px;line-height:39px">Bild 8</div>
<div class="abs" style="left:0;top:0;width:2px;height:1029px;background:linear-gradient(90deg,#8c1d18 0 1px,#e9c6c1 1px 2px)"></div>
<div class="abs" style="left:1723px;top:0;width:3px;height:1027px;background:#dfe1ea"></div><div class="abs" style="left:1723px;top:0;width:3px;height:62px;background:#f4f4f6"></div><div class="abs" style="left:1723px;top:0;width:1px;height:1027px;background:#9a9a9a"></div><div class="abs" style="left:1724px;top:75px;width:2px;height:15px;background:#3f5f86"></div><div class="abs" style="left:1724px;top:132px;width:2px;height:10px;background:#5a7aa0"></div>
</body></html>
